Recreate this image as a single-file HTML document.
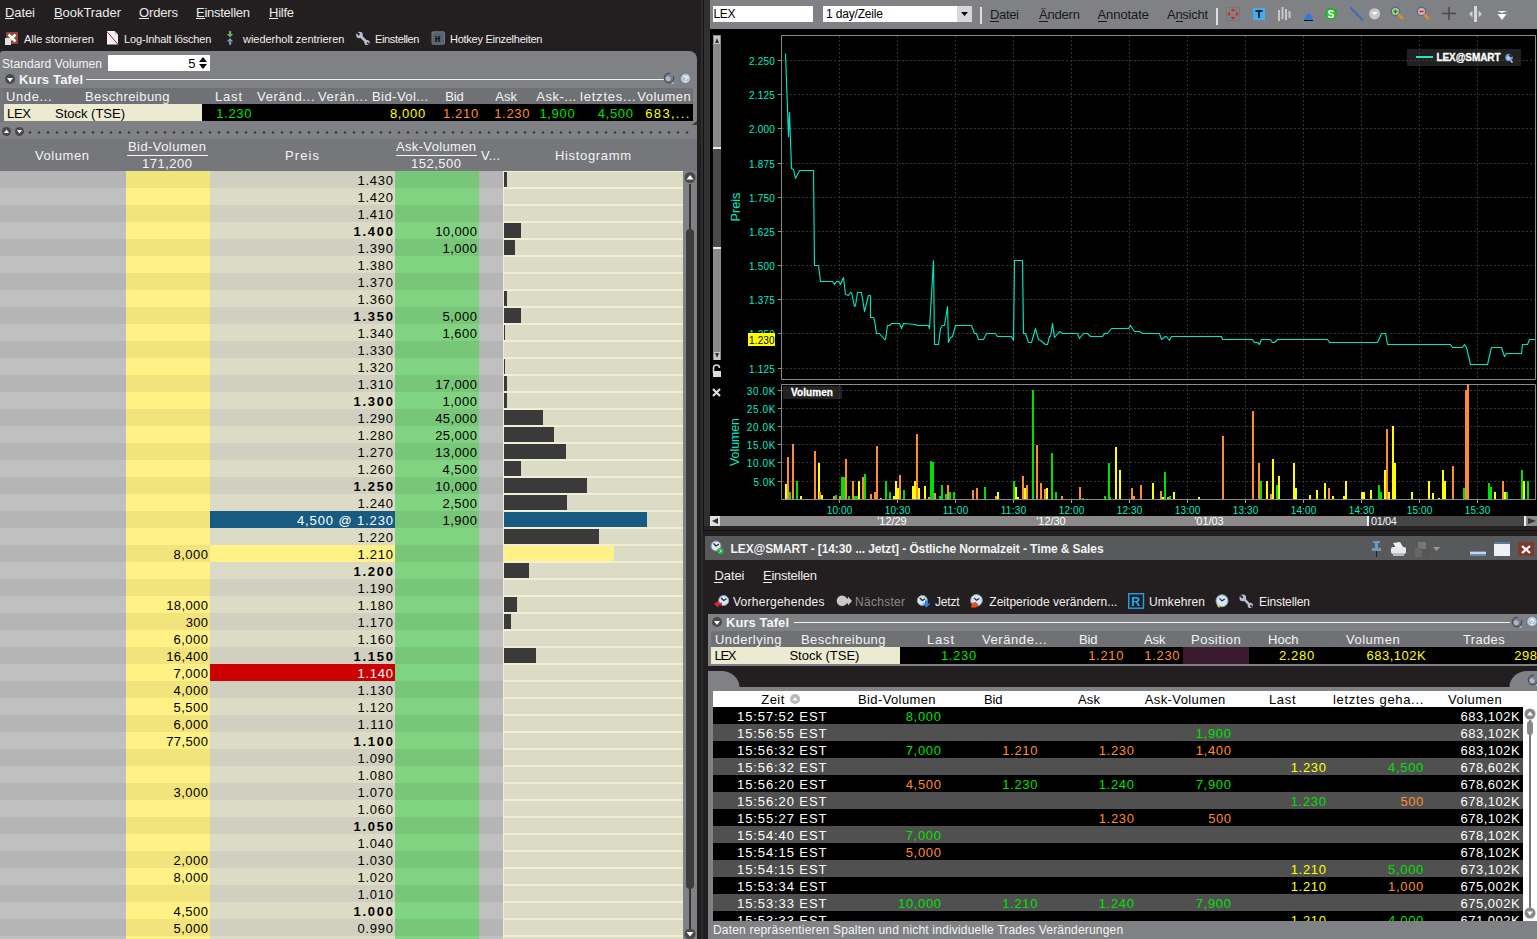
<!DOCTYPE html>
<html><head><meta charset="utf-8"><style>
html,body{margin:0;padding:0;width:1537px;height:939px;overflow:hidden;background:#231f20}
body{position:relative;font-family:"Liberation Sans",sans-serif}
div,span,svg{position:absolute}
.t{white-space:nowrap}
</style></head><body>
<div style="left:0px;top:0px;width:697px;height:939px;background:#231f20;"></div>
<span class="t" style="left:5.00px;top:3.15px;font-size:13px;line-height:20px;color:#ebebeb;letter-spacing:-0.090px;">Datei</span>
<div style="left:5px;top:18px;width:9px;height:1px;background:#ebebeb;"></div>
<span class="t" style="left:54.00px;top:3.15px;font-size:13px;line-height:20px;color:#ebebeb;letter-spacing:-0.050px;">BookTrader</span>
<div style="left:54px;top:18px;width:9px;height:1px;background:#ebebeb;"></div>
<span class="t" style="left:139.00px;top:3.15px;font-size:13px;line-height:20px;color:#ebebeb;letter-spacing:-0.147px;">Orders</span>
<div style="left:139px;top:18px;width:10px;height:1px;background:#ebebeb;"></div>
<span class="t" style="left:196.00px;top:3.15px;font-size:13px;line-height:20px;color:#ebebeb;letter-spacing:-0.266px;">Einstellen</span>
<div style="left:196px;top:18px;width:9px;height:1px;background:#ebebeb;"></div>
<span class="t" style="left:269.00px;top:3.15px;font-size:13px;line-height:20px;color:#ebebeb;letter-spacing:-0.254px;">Hilfe</span>
<div style="left:269px;top:18px;width:9px;height:1px;background:#ebebeb;"></div>
<span class="t" style="left:24.00px;top:29.13px;font-size:11px;line-height:20px;color:#f0f0f0;letter-spacing:-0.025px;">Alle stornieren</span>
<span class="t" style="left:124.00px;top:29.13px;font-size:11px;line-height:20px;color:#f0f0f0;letter-spacing:-0.145px;">Log-Inhalt löschen</span>
<span class="t" style="left:243.00px;top:29.13px;font-size:11px;line-height:20px;color:#f0f0f0;letter-spacing:-0.033px;">wiederholt zentrieren</span>
<span class="t" style="left:375.00px;top:29.13px;font-size:11px;line-height:20px;color:#f0f0f0;letter-spacing:-0.358px;">Einstellen</span>
<span class="t" style="left:450.00px;top:29.13px;font-size:11px;line-height:20px;color:#f0f0f0;letter-spacing:-0.266px;">Hotkey Einzelheiten</span>
<div style="left:0px;top:51px;width:697px;height:888px;background:#808185;border-top-right-radius:8px;border-top-left-radius:3px;"></div>
<span class="t" style="left:2.00px;top:53.74px;font-size:12px;line-height:20px;color:#f4f4f4;letter-spacing:0.085px;">Standard Volumen</span>
<div style="left:108px;top:55px;width:102px;height:16px;background:#ffffff;"></div>
<span class="t" style="left:188.27px;top:53.75px;font-size:13px;line-height:20px;color:#000;">5</span>
<svg style="position:absolute;left:198px;top:56px" width="11" height="14"><path d="M1 6 L5 1 L9 6 Z" fill="#000"/><path d="M1 8 L5 13 L9 8 Z" fill="#000"/></svg>
<svg style="position:absolute;left:4px;top:73px" width="12" height="12"><circle cx="6" cy="6" r="5" fill="#4a4a4a"/><path d="M3 5 L9 5 L6 9 Z" fill="#fff"/></svg>
<span class="t" style="left:19.00px;top:70.15px;font-size:13px;line-height:20px;color:#f4f4f4;font-weight:bold;letter-spacing:0.155px;">Kurs Tafel</span>
<div style="left:86px;top:79px;width:579px;height:1px;background:#f0f0f0;"></div>
<div style="left:4px;top:88px;width:689px;height:16px;background:#707175;"></div>
<div style="left:0px;top:88px;width:4px;height:34px;background:#75767a;"></div>
<span class="t" style="left:6.00px;top:86.85px;font-size:13px;line-height:20px;color:#f4f4f4;letter-spacing:0.596px;">Unde...</span>
<span class="t" style="left:85.00px;top:86.85px;font-size:13px;line-height:20px;color:#f4f4f4;letter-spacing:0.452px;">Beschreibung</span>
<span class="t" style="left:215.00px;top:86.85px;font-size:13px;line-height:20px;color:#f4f4f4;letter-spacing:0.807px;">Last</span>
<span class="t" style="left:257.00px;top:86.85px;font-size:13px;line-height:20px;color:#f4f4f4;letter-spacing:0.682px;">Veränd...</span>
<span class="t" style="left:318.00px;top:86.85px;font-size:13px;line-height:20px;color:#f4f4f4;letter-spacing:0.670px;">Verän...</span>
<span class="t" style="left:372.00px;top:86.85px;font-size:13px;line-height:20px;color:#f4f4f4;letter-spacing:0.441px;">Bid-Vol...</span>
<span class="t" style="left:445.20px;top:86.85px;font-size:13px;line-height:20px;color:#f4f4f4;letter-spacing:-0.148px;">Bid</span>
<span class="t" style="left:495.30px;top:86.85px;font-size:13px;line-height:20px;color:#f4f4f4;letter-spacing:0.014px;">Ask</span>
<span class="t" style="left:536.20px;top:86.85px;font-size:13px;line-height:20px;color:#f4f4f4;letter-spacing:0.529px;">Ask-...</span>
<span class="t" style="left:580.00px;top:86.85px;font-size:13px;line-height:20px;color:#f4f4f4;letter-spacing:0.788px;">letztes...</span>
<span class="t" style="left:637.30px;top:86.85px;font-size:13px;line-height:20px;color:#f4f4f4;letter-spacing:0.465px;">Volumen</span>
<div style="left:4px;top:104px;width:198px;height:17px;background:#ecebd2;"></div>
<div style="left:202px;top:104px;width:491px;height:17px;background:#000000;"></div>
<span class="t" style="left:7.00px;top:103.65px;font-size:13px;line-height:20px;color:#000;letter-spacing:-0.289px;">LEX</span>
<span class="t" style="left:55.00px;top:103.65px;font-size:13px;line-height:20px;color:#000;letter-spacing:-0.006px;">Stock (TSE)</span>
<span class="t" style="left:216.20px;top:103.85px;font-size:13px;line-height:20px;color:#00e000;letter-spacing:0.688px;">1.230</span>
<span class="t" style="left:389.90px;top:103.85px;font-size:13px;line-height:20px;color:#ffff00;letter-spacing:0.688px;">8,000</span>
<span class="t" style="left:442.90px;top:103.85px;font-size:13px;line-height:20px;color:#ff8c30;letter-spacing:0.688px;">1.210</span>
<span class="t" style="left:494.20px;top:103.85px;font-size:13px;line-height:20px;color:#ff8c30;letter-spacing:0.688px;">1.230</span>
<span class="t" style="left:539.40px;top:103.85px;font-size:13px;line-height:20px;color:#00e000;letter-spacing:0.688px;">1,900</span>
<span class="t" style="left:597.70px;top:103.85px;font-size:13px;line-height:20px;color:#00e000;letter-spacing:0.688px;">4,500</span>
<span class="t" style="left:645.30px;top:103.85px;font-size:13px;line-height:20px;color:#ffff00;letter-spacing:1.310px;">683,...</span>
<svg style="position:absolute;left:692px;top:120px" width="5" height="6"><path d="M0 5 L5 5 L5 1 Z" fill="#3a3a3c"/></svg>
<svg style="position:absolute;left:0;top:125px" width="697" height="14"><circle cx="6.5" cy="6.5" r="4.5" fill="#4a4a4a"/><path d="M4 8 L9 8 L6.5 4.5 Z" fill="#fff"/><circle cx="19.5" cy="6.5" r="4.5" fill="#4a4a4a"/><path d="M17 5 L22 5 L19.5 8.5 Z" fill="#fff"/><circle cx="30" cy="7.5" r="1.3" fill="#3a3a3a"/><circle cx="39" cy="7.5" r="1.3" fill="#3a3a3a"/><circle cx="48" cy="7.5" r="1.3" fill="#3a3a3a"/><circle cx="57" cy="7.5" r="1.3" fill="#3a3a3a"/><circle cx="66" cy="7.5" r="1.3" fill="#3a3a3a"/><circle cx="75" cy="7.5" r="1.3" fill="#3a3a3a"/><circle cx="84" cy="7.5" r="1.3" fill="#3a3a3a"/><circle cx="93" cy="7.5" r="1.3" fill="#3a3a3a"/><circle cx="102" cy="7.5" r="1.3" fill="#3a3a3a"/><circle cx="111" cy="7.5" r="1.3" fill="#3a3a3a"/><circle cx="120" cy="7.5" r="1.3" fill="#3a3a3a"/><circle cx="129" cy="7.5" r="1.3" fill="#3a3a3a"/><circle cx="138" cy="7.5" r="1.3" fill="#3a3a3a"/><circle cx="147" cy="7.5" r="1.3" fill="#3a3a3a"/><circle cx="156" cy="7.5" r="1.3" fill="#3a3a3a"/><circle cx="165" cy="7.5" r="1.3" fill="#3a3a3a"/><circle cx="174" cy="7.5" r="1.3" fill="#3a3a3a"/><circle cx="183" cy="7.5" r="1.3" fill="#3a3a3a"/><circle cx="192" cy="7.5" r="1.3" fill="#3a3a3a"/><circle cx="201" cy="7.5" r="1.3" fill="#3a3a3a"/><circle cx="210" cy="7.5" r="1.3" fill="#3a3a3a"/><circle cx="219" cy="7.5" r="1.3" fill="#3a3a3a"/><circle cx="228" cy="7.5" r="1.3" fill="#3a3a3a"/><circle cx="237" cy="7.5" r="1.3" fill="#3a3a3a"/><circle cx="246" cy="7.5" r="1.3" fill="#3a3a3a"/><circle cx="255" cy="7.5" r="1.3" fill="#3a3a3a"/><circle cx="264" cy="7.5" r="1.3" fill="#3a3a3a"/><circle cx="273" cy="7.5" r="1.3" fill="#3a3a3a"/><circle cx="282" cy="7.5" r="1.3" fill="#3a3a3a"/><circle cx="291" cy="7.5" r="1.3" fill="#3a3a3a"/><circle cx="300" cy="7.5" r="1.3" fill="#3a3a3a"/><circle cx="309" cy="7.5" r="1.3" fill="#3a3a3a"/><circle cx="318" cy="7.5" r="1.3" fill="#3a3a3a"/><circle cx="327" cy="7.5" r="1.3" fill="#3a3a3a"/><circle cx="336" cy="7.5" r="1.3" fill="#3a3a3a"/><circle cx="345" cy="7.5" r="1.3" fill="#3a3a3a"/><circle cx="354" cy="7.5" r="1.3" fill="#3a3a3a"/><circle cx="363" cy="7.5" r="1.3" fill="#3a3a3a"/><circle cx="372" cy="7.5" r="1.3" fill="#3a3a3a"/><circle cx="381" cy="7.5" r="1.3" fill="#3a3a3a"/><circle cx="390" cy="7.5" r="1.3" fill="#3a3a3a"/><circle cx="399" cy="7.5" r="1.3" fill="#3a3a3a"/><circle cx="408" cy="7.5" r="1.3" fill="#3a3a3a"/><circle cx="417" cy="7.5" r="1.3" fill="#3a3a3a"/><circle cx="426" cy="7.5" r="1.3" fill="#3a3a3a"/><circle cx="435" cy="7.5" r="1.3" fill="#3a3a3a"/><circle cx="444" cy="7.5" r="1.3" fill="#3a3a3a"/><circle cx="453" cy="7.5" r="1.3" fill="#3a3a3a"/><circle cx="462" cy="7.5" r="1.3" fill="#3a3a3a"/><circle cx="471" cy="7.5" r="1.3" fill="#3a3a3a"/><circle cx="480" cy="7.5" r="1.3" fill="#3a3a3a"/><circle cx="489" cy="7.5" r="1.3" fill="#3a3a3a"/><circle cx="498" cy="7.5" r="1.3" fill="#3a3a3a"/><circle cx="507" cy="7.5" r="1.3" fill="#3a3a3a"/><circle cx="516" cy="7.5" r="1.3" fill="#3a3a3a"/><circle cx="525" cy="7.5" r="1.3" fill="#3a3a3a"/><circle cx="534" cy="7.5" r="1.3" fill="#3a3a3a"/><circle cx="543" cy="7.5" r="1.3" fill="#3a3a3a"/><circle cx="552" cy="7.5" r="1.3" fill="#3a3a3a"/><circle cx="561" cy="7.5" r="1.3" fill="#3a3a3a"/><circle cx="570" cy="7.5" r="1.3" fill="#3a3a3a"/><circle cx="579" cy="7.5" r="1.3" fill="#3a3a3a"/><circle cx="588" cy="7.5" r="1.3" fill="#3a3a3a"/><circle cx="597" cy="7.5" r="1.3" fill="#3a3a3a"/><circle cx="606" cy="7.5" r="1.3" fill="#3a3a3a"/><circle cx="615" cy="7.5" r="1.3" fill="#3a3a3a"/><circle cx="624" cy="7.5" r="1.3" fill="#3a3a3a"/><circle cx="633" cy="7.5" r="1.3" fill="#3a3a3a"/><circle cx="642" cy="7.5" r="1.3" fill="#3a3a3a"/><circle cx="651" cy="7.5" r="1.3" fill="#3a3a3a"/><circle cx="660" cy="7.5" r="1.3" fill="#3a3a3a"/><circle cx="669" cy="7.5" r="1.3" fill="#3a3a3a"/><circle cx="678" cy="7.5" r="1.3" fill="#3a3a3a"/><circle cx="687" cy="7.5" r="1.3" fill="#3a3a3a"/></svg>
<div style="left:0px;top:139px;width:697px;height:32px;background:#76777b;"></div>
<span class="t" style="left:35.00px;top:146.15px;font-size:13px;line-height:20px;color:#f4f4f4;letter-spacing:0.565px;">Volumen</span>
<span class="t" style="left:128.00px;top:137.15px;font-size:13px;line-height:20px;color:#f4f4f4;letter-spacing:0.427px;">Bid-Volumen</span>
<div style="left:127px;top:155px;width:81px;height:1px;background:#f4f4f4;"></div>
<span class="t" style="left:142.00px;top:154.15px;font-size:13px;line-height:20px;color:#f4f4f4;letter-spacing:0.497px;">171,200</span>
<span class="t" style="left:285.00px;top:146.15px;font-size:13px;line-height:20px;color:#f4f4f4;letter-spacing:1.094px;">Preis</span>
<span class="t" style="left:396.00px;top:137.15px;font-size:13px;line-height:20px;color:#f4f4f4;letter-spacing:0.339px;">Ask-Volumen</span>
<div style="left:396px;top:155px;width:81px;height:1px;background:#f4f4f4;"></div>
<span class="t" style="left:411.00px;top:154.15px;font-size:13px;line-height:20px;color:#f4f4f4;letter-spacing:0.497px;">152,500</span>
<span class="t" style="left:481.00px;top:146.15px;font-size:13px;line-height:20px;color:#f4f4f4;letter-spacing:0.229px;">V...</span>
<span class="t" style="left:555.00px;top:146.15px;font-size:13px;line-height:20px;color:#f4f4f4;letter-spacing:0.658px;">Histogramm</span>
<div style="left:0px;top:171px;width:126px;height:17px;background:#b5b5b5;"></div>
<div style="left:126px;top:171px;width:84px;height:17px;background:#f2e47c;"></div>
<div style="left:210px;top:171px;width:185px;height:17px;background:#d0d0c0;"></div>
<div style="left:395px;top:171px;width:84px;height:17px;background:#78c678;"></div>
<div style="left:479px;top:171px;width:24px;height:17px;background:#b5b5b5;"></div>
<div style="left:503px;top:171px;width:180px;height:17px;background:#f1efd3;"></div>
<div style="left:504px;top:172px;width:179px;height:15px;background:#dcdcc6;"></div>
<div style="left:504px;top:172px;width:3px;height:15px;background:#3a3a3a;"></div>
<span class="t" style="left:357.50px;top:170.65px;font-size:13px;line-height:20px;color:#000;letter-spacing:0.738px;">1.430</span>
<div style="left:0px;top:188px;width:126px;height:17px;background:#c0c0c0;"></div>
<div style="left:126px;top:188px;width:84px;height:17px;background:#fff185;"></div>
<div style="left:210px;top:188px;width:185px;height:17px;background:#dcdcc6;"></div>
<div style="left:395px;top:188px;width:84px;height:17px;background:#80d380;"></div>
<div style="left:479px;top:188px;width:24px;height:17px;background:#c0c0c0;"></div>
<div style="left:503px;top:188px;width:180px;height:17px;background:#f1efd3;"></div>
<div style="left:504px;top:189px;width:179px;height:15px;background:#dcdcc6;"></div>
<span class="t" style="left:357.50px;top:187.65px;font-size:13px;line-height:20px;color:#000;letter-spacing:0.738px;">1.420</span>
<div style="left:0px;top:205px;width:126px;height:17px;background:#b5b5b5;"></div>
<div style="left:126px;top:205px;width:84px;height:17px;background:#f2e47c;"></div>
<div style="left:210px;top:205px;width:185px;height:17px;background:#d0d0c0;"></div>
<div style="left:395px;top:205px;width:84px;height:17px;background:#78c678;"></div>
<div style="left:479px;top:205px;width:24px;height:17px;background:#b5b5b5;"></div>
<div style="left:503px;top:205px;width:180px;height:17px;background:#f1efd3;"></div>
<div style="left:504px;top:206px;width:179px;height:15px;background:#dcdcc6;"></div>
<span class="t" style="left:357.50px;top:204.65px;font-size:13px;line-height:20px;color:#000;letter-spacing:0.738px;">1.410</span>
<div style="left:0px;top:222px;width:126px;height:17px;background:#c0c0c0;"></div>
<div style="left:126px;top:222px;width:84px;height:17px;background:#fff185;"></div>
<div style="left:210px;top:222px;width:185px;height:17px;background:#dcdcc6;"></div>
<div style="left:395px;top:222px;width:84px;height:17px;background:#80d380;"></div>
<div style="left:479px;top:222px;width:24px;height:17px;background:#c0c0c0;"></div>
<div style="left:503px;top:222px;width:180px;height:17px;background:#f1efd3;"></div>
<div style="left:504px;top:223px;width:179px;height:15px;background:#dcdcc6;"></div>
<div style="left:504px;top:223px;width:17px;height:15px;background:#3a3a3a;"></div>
<span class="t" style="left:353.50px;top:221.65px;font-size:13px;line-height:20px;color:#000;font-weight:bold;letter-spacing:1.738px;">1.400</span>
<span class="t" style="left:435.15px;top:221.65px;font-size:13px;line-height:20px;color:#000;letter-spacing:0.414px;">10,000</span>
<div style="left:0px;top:239px;width:126px;height:17px;background:#b5b5b5;"></div>
<div style="left:126px;top:239px;width:84px;height:17px;background:#f2e47c;"></div>
<div style="left:210px;top:239px;width:185px;height:17px;background:#d0d0c0;"></div>
<div style="left:395px;top:239px;width:84px;height:17px;background:#78c678;"></div>
<div style="left:479px;top:239px;width:24px;height:17px;background:#b5b5b5;"></div>
<div style="left:503px;top:239px;width:180px;height:17px;background:#f1efd3;"></div>
<div style="left:504px;top:240px;width:179px;height:15px;background:#dcdcc6;"></div>
<div style="left:504px;top:240px;width:11px;height:15px;background:#3a3a3a;"></div>
<span class="t" style="left:357.50px;top:238.65px;font-size:13px;line-height:20px;color:#000;letter-spacing:0.738px;">1.390</span>
<span class="t" style="left:442.60px;top:238.65px;font-size:13px;line-height:20px;color:#000;letter-spacing:0.463px;">1,000</span>
<div style="left:0px;top:256px;width:126px;height:17px;background:#c0c0c0;"></div>
<div style="left:126px;top:256px;width:84px;height:17px;background:#fff185;"></div>
<div style="left:210px;top:256px;width:185px;height:17px;background:#dcdcc6;"></div>
<div style="left:395px;top:256px;width:84px;height:17px;background:#80d380;"></div>
<div style="left:479px;top:256px;width:24px;height:17px;background:#c0c0c0;"></div>
<div style="left:503px;top:256px;width:180px;height:17px;background:#f1efd3;"></div>
<div style="left:504px;top:257px;width:179px;height:15px;background:#dcdcc6;"></div>
<span class="t" style="left:357.50px;top:255.65px;font-size:13px;line-height:20px;color:#000;letter-spacing:0.738px;">1.380</span>
<div style="left:0px;top:273px;width:126px;height:17px;background:#b5b5b5;"></div>
<div style="left:126px;top:273px;width:84px;height:17px;background:#f2e47c;"></div>
<div style="left:210px;top:273px;width:185px;height:17px;background:#d0d0c0;"></div>
<div style="left:395px;top:273px;width:84px;height:17px;background:#78c678;"></div>
<div style="left:479px;top:273px;width:24px;height:17px;background:#b5b5b5;"></div>
<div style="left:503px;top:273px;width:180px;height:17px;background:#f1efd3;"></div>
<div style="left:504px;top:274px;width:179px;height:15px;background:#dcdcc6;"></div>
<span class="t" style="left:357.50px;top:272.65px;font-size:13px;line-height:20px;color:#000;letter-spacing:0.738px;">1.370</span>
<div style="left:0px;top:290px;width:126px;height:17px;background:#c0c0c0;"></div>
<div style="left:126px;top:290px;width:84px;height:17px;background:#fff185;"></div>
<div style="left:210px;top:290px;width:185px;height:17px;background:#dcdcc6;"></div>
<div style="left:395px;top:290px;width:84px;height:17px;background:#80d380;"></div>
<div style="left:479px;top:290px;width:24px;height:17px;background:#c0c0c0;"></div>
<div style="left:503px;top:290px;width:180px;height:17px;background:#f1efd3;"></div>
<div style="left:504px;top:291px;width:179px;height:15px;background:#dcdcc6;"></div>
<div style="left:504px;top:291px;width:3px;height:15px;background:#3a3a3a;"></div>
<span class="t" style="left:357.50px;top:289.65px;font-size:13px;line-height:20px;color:#000;letter-spacing:0.738px;">1.360</span>
<div style="left:0px;top:307px;width:126px;height:17px;background:#b5b5b5;"></div>
<div style="left:126px;top:307px;width:84px;height:17px;background:#f2e47c;"></div>
<div style="left:210px;top:307px;width:185px;height:17px;background:#d0d0c0;"></div>
<div style="left:395px;top:307px;width:84px;height:17px;background:#78c678;"></div>
<div style="left:479px;top:307px;width:24px;height:17px;background:#b5b5b5;"></div>
<div style="left:503px;top:307px;width:180px;height:17px;background:#f1efd3;"></div>
<div style="left:504px;top:308px;width:179px;height:15px;background:#dcdcc6;"></div>
<div style="left:504px;top:308px;width:17px;height:15px;background:#3a3a3a;"></div>
<span class="t" style="left:353.50px;top:306.65px;font-size:13px;line-height:20px;color:#000;font-weight:bold;letter-spacing:1.738px;">1.350</span>
<span class="t" style="left:442.60px;top:306.65px;font-size:13px;line-height:20px;color:#000;letter-spacing:0.463px;">5,000</span>
<div style="left:0px;top:324px;width:126px;height:17px;background:#c0c0c0;"></div>
<div style="left:126px;top:324px;width:84px;height:17px;background:#fff185;"></div>
<div style="left:210px;top:324px;width:185px;height:17px;background:#dcdcc6;"></div>
<div style="left:395px;top:324px;width:84px;height:17px;background:#80d380;"></div>
<div style="left:479px;top:324px;width:24px;height:17px;background:#c0c0c0;"></div>
<div style="left:503px;top:324px;width:180px;height:17px;background:#f1efd3;"></div>
<div style="left:504px;top:325px;width:179px;height:15px;background:#dcdcc6;"></div>
<div style="left:504px;top:325px;width:1px;height:15px;background:#3a3a3a;"></div>
<span class="t" style="left:357.50px;top:323.65px;font-size:13px;line-height:20px;color:#000;letter-spacing:0.738px;">1.340</span>
<span class="t" style="left:442.60px;top:323.65px;font-size:13px;line-height:20px;color:#000;letter-spacing:0.463px;">1,600</span>
<div style="left:0px;top:341px;width:126px;height:17px;background:#b5b5b5;"></div>
<div style="left:126px;top:341px;width:84px;height:17px;background:#f2e47c;"></div>
<div style="left:210px;top:341px;width:185px;height:17px;background:#d0d0c0;"></div>
<div style="left:395px;top:341px;width:84px;height:17px;background:#78c678;"></div>
<div style="left:479px;top:341px;width:24px;height:17px;background:#b5b5b5;"></div>
<div style="left:503px;top:341px;width:180px;height:17px;background:#f1efd3;"></div>
<div style="left:504px;top:342px;width:179px;height:15px;background:#dcdcc6;"></div>
<span class="t" style="left:357.50px;top:340.65px;font-size:13px;line-height:20px;color:#000;letter-spacing:0.738px;">1.330</span>
<div style="left:0px;top:358px;width:126px;height:17px;background:#c0c0c0;"></div>
<div style="left:126px;top:358px;width:84px;height:17px;background:#fff185;"></div>
<div style="left:210px;top:358px;width:185px;height:17px;background:#dcdcc6;"></div>
<div style="left:395px;top:358px;width:84px;height:17px;background:#80d380;"></div>
<div style="left:479px;top:358px;width:24px;height:17px;background:#c0c0c0;"></div>
<div style="left:503px;top:358px;width:180px;height:17px;background:#f1efd3;"></div>
<div style="left:504px;top:359px;width:179px;height:15px;background:#dcdcc6;"></div>
<div style="left:504px;top:359px;width:1px;height:15px;background:#3a3a3a;"></div>
<span class="t" style="left:357.50px;top:357.65px;font-size:13px;line-height:20px;color:#000;letter-spacing:0.738px;">1.320</span>
<div style="left:0px;top:375px;width:126px;height:17px;background:#b5b5b5;"></div>
<div style="left:126px;top:375px;width:84px;height:17px;background:#f2e47c;"></div>
<div style="left:210px;top:375px;width:185px;height:17px;background:#d0d0c0;"></div>
<div style="left:395px;top:375px;width:84px;height:17px;background:#78c678;"></div>
<div style="left:479px;top:375px;width:24px;height:17px;background:#b5b5b5;"></div>
<div style="left:503px;top:375px;width:180px;height:17px;background:#f1efd3;"></div>
<div style="left:504px;top:376px;width:179px;height:15px;background:#dcdcc6;"></div>
<div style="left:504px;top:376px;width:3px;height:15px;background:#3a3a3a;"></div>
<span class="t" style="left:357.50px;top:374.65px;font-size:13px;line-height:20px;color:#000;letter-spacing:0.738px;">1.310</span>
<span class="t" style="left:435.15px;top:374.65px;font-size:13px;line-height:20px;color:#000;letter-spacing:0.414px;">17,000</span>
<div style="left:0px;top:392px;width:126px;height:17px;background:#c0c0c0;"></div>
<div style="left:126px;top:392px;width:84px;height:17px;background:#fff185;"></div>
<div style="left:210px;top:392px;width:185px;height:17px;background:#dcdcc6;"></div>
<div style="left:395px;top:392px;width:84px;height:17px;background:#80d380;"></div>
<div style="left:479px;top:392px;width:24px;height:17px;background:#c0c0c0;"></div>
<div style="left:503px;top:392px;width:180px;height:17px;background:#f1efd3;"></div>
<div style="left:504px;top:393px;width:179px;height:15px;background:#dcdcc6;"></div>
<div style="left:504px;top:393px;width:3px;height:15px;background:#3a3a3a;"></div>
<span class="t" style="left:353.50px;top:391.65px;font-size:13px;line-height:20px;color:#000;font-weight:bold;letter-spacing:1.738px;">1.300</span>
<span class="t" style="left:442.60px;top:391.65px;font-size:13px;line-height:20px;color:#000;letter-spacing:0.463px;">1,000</span>
<div style="left:0px;top:409px;width:126px;height:17px;background:#b5b5b5;"></div>
<div style="left:126px;top:409px;width:84px;height:17px;background:#f2e47c;"></div>
<div style="left:210px;top:409px;width:185px;height:17px;background:#d0d0c0;"></div>
<div style="left:395px;top:409px;width:84px;height:17px;background:#78c678;"></div>
<div style="left:479px;top:409px;width:24px;height:17px;background:#b5b5b5;"></div>
<div style="left:503px;top:409px;width:180px;height:17px;background:#f1efd3;"></div>
<div style="left:504px;top:410px;width:179px;height:15px;background:#dcdcc6;"></div>
<div style="left:504px;top:410px;width:39px;height:15px;background:#3a3a3a;"></div>
<span class="t" style="left:357.50px;top:408.65px;font-size:13px;line-height:20px;color:#000;letter-spacing:0.738px;">1.290</span>
<span class="t" style="left:435.15px;top:408.65px;font-size:13px;line-height:20px;color:#000;letter-spacing:0.414px;">45,000</span>
<div style="left:0px;top:426px;width:126px;height:17px;background:#c0c0c0;"></div>
<div style="left:126px;top:426px;width:84px;height:17px;background:#fff185;"></div>
<div style="left:210px;top:426px;width:185px;height:17px;background:#dcdcc6;"></div>
<div style="left:395px;top:426px;width:84px;height:17px;background:#80d380;"></div>
<div style="left:479px;top:426px;width:24px;height:17px;background:#c0c0c0;"></div>
<div style="left:503px;top:426px;width:180px;height:17px;background:#f1efd3;"></div>
<div style="left:504px;top:427px;width:179px;height:15px;background:#dcdcc6;"></div>
<div style="left:504px;top:427px;width:50px;height:15px;background:#3a3a3a;"></div>
<span class="t" style="left:357.50px;top:425.65px;font-size:13px;line-height:20px;color:#000;letter-spacing:0.738px;">1.280</span>
<span class="t" style="left:435.15px;top:425.65px;font-size:13px;line-height:20px;color:#000;letter-spacing:0.414px;">25,000</span>
<div style="left:0px;top:443px;width:126px;height:17px;background:#b5b5b5;"></div>
<div style="left:126px;top:443px;width:84px;height:17px;background:#f2e47c;"></div>
<div style="left:210px;top:443px;width:185px;height:17px;background:#d0d0c0;"></div>
<div style="left:395px;top:443px;width:84px;height:17px;background:#78c678;"></div>
<div style="left:479px;top:443px;width:24px;height:17px;background:#b5b5b5;"></div>
<div style="left:503px;top:443px;width:180px;height:17px;background:#f1efd3;"></div>
<div style="left:504px;top:444px;width:179px;height:15px;background:#dcdcc6;"></div>
<div style="left:504px;top:444px;width:62px;height:15px;background:#3a3a3a;"></div>
<span class="t" style="left:357.50px;top:442.65px;font-size:13px;line-height:20px;color:#000;letter-spacing:0.738px;">1.270</span>
<span class="t" style="left:435.15px;top:442.65px;font-size:13px;line-height:20px;color:#000;letter-spacing:0.414px;">13,000</span>
<div style="left:0px;top:460px;width:126px;height:17px;background:#c0c0c0;"></div>
<div style="left:126px;top:460px;width:84px;height:17px;background:#fff185;"></div>
<div style="left:210px;top:460px;width:185px;height:17px;background:#dcdcc6;"></div>
<div style="left:395px;top:460px;width:84px;height:17px;background:#80d380;"></div>
<div style="left:479px;top:460px;width:24px;height:17px;background:#c0c0c0;"></div>
<div style="left:503px;top:460px;width:180px;height:17px;background:#f1efd3;"></div>
<div style="left:504px;top:461px;width:179px;height:15px;background:#dcdcc6;"></div>
<div style="left:504px;top:461px;width:17px;height:15px;background:#3a3a3a;"></div>
<span class="t" style="left:357.50px;top:459.65px;font-size:13px;line-height:20px;color:#000;letter-spacing:0.738px;">1.260</span>
<span class="t" style="left:442.60px;top:459.65px;font-size:13px;line-height:20px;color:#000;letter-spacing:0.463px;">4,500</span>
<div style="left:0px;top:477px;width:126px;height:17px;background:#b5b5b5;"></div>
<div style="left:126px;top:477px;width:84px;height:17px;background:#f2e47c;"></div>
<div style="left:210px;top:477px;width:185px;height:17px;background:#d0d0c0;"></div>
<div style="left:395px;top:477px;width:84px;height:17px;background:#78c678;"></div>
<div style="left:479px;top:477px;width:24px;height:17px;background:#b5b5b5;"></div>
<div style="left:503px;top:477px;width:180px;height:17px;background:#f1efd3;"></div>
<div style="left:504px;top:478px;width:179px;height:15px;background:#dcdcc6;"></div>
<div style="left:504px;top:478px;width:83px;height:15px;background:#3a3a3a;"></div>
<span class="t" style="left:353.50px;top:476.65px;font-size:13px;line-height:20px;color:#000;font-weight:bold;letter-spacing:1.738px;">1.250</span>
<span class="t" style="left:435.15px;top:476.65px;font-size:13px;line-height:20px;color:#000;letter-spacing:0.414px;">10,000</span>
<div style="left:0px;top:494px;width:126px;height:17px;background:#c0c0c0;"></div>
<div style="left:126px;top:494px;width:84px;height:17px;background:#fff185;"></div>
<div style="left:210px;top:494px;width:185px;height:17px;background:#dcdcc6;"></div>
<div style="left:395px;top:494px;width:84px;height:17px;background:#80d380;"></div>
<div style="left:479px;top:494px;width:24px;height:17px;background:#c0c0c0;"></div>
<div style="left:503px;top:494px;width:180px;height:17px;background:#f1efd3;"></div>
<div style="left:504px;top:495px;width:179px;height:15px;background:#dcdcc6;"></div>
<div style="left:504px;top:495px;width:63px;height:15px;background:#3a3a3a;"></div>
<span class="t" style="left:357.50px;top:493.65px;font-size:13px;line-height:20px;color:#000;letter-spacing:0.738px;">1.240</span>
<span class="t" style="left:442.60px;top:493.65px;font-size:13px;line-height:20px;color:#000;letter-spacing:0.463px;">2,500</span>
<div style="left:0px;top:511px;width:126px;height:17px;background:#b5b5b5;"></div>
<div style="left:126px;top:511px;width:84px;height:17px;background:#f2e47c;"></div>
<div style="left:210px;top:511px;width:185px;height:17px;background:#175a82;"></div>
<div style="left:395px;top:511px;width:84px;height:17px;background:#78c678;"></div>
<div style="left:479px;top:511px;width:24px;height:17px;background:#b5b5b5;"></div>
<div style="left:503px;top:511px;width:180px;height:17px;background:#f1efd3;"></div>
<div style="left:504px;top:512px;width:179px;height:15px;background:#dcdcc6;"></div>
<div style="left:504px;top:512px;width:143px;height:15px;background:#175a82;"></div>
<span class="t" style="left:297.00px;top:510.65px;font-size:13px;line-height:20px;color:#fff;letter-spacing:0.874px;">4,500 @ 1.230</span>
<span class="t" style="left:442.60px;top:510.65px;font-size:13px;line-height:20px;color:#000;letter-spacing:0.463px;">1,900</span>
<div style="left:0px;top:528px;width:126px;height:17px;background:#c0c0c0;"></div>
<div style="left:126px;top:528px;width:84px;height:17px;background:#fff185;"></div>
<div style="left:210px;top:528px;width:185px;height:17px;background:#dcdcc6;"></div>
<div style="left:395px;top:528px;width:84px;height:17px;background:#80d380;"></div>
<div style="left:479px;top:528px;width:24px;height:17px;background:#c0c0c0;"></div>
<div style="left:503px;top:528px;width:180px;height:17px;background:#f1efd3;"></div>
<div style="left:504px;top:529px;width:179px;height:15px;background:#dcdcc6;"></div>
<div style="left:504px;top:529px;width:95px;height:15px;background:#3a3a3a;"></div>
<span class="t" style="left:357.50px;top:527.65px;font-size:13px;line-height:20px;color:#000;letter-spacing:0.738px;">1.220</span>
<div style="left:0px;top:545px;width:126px;height:17px;background:#b5b5b5;"></div>
<div style="left:126px;top:545px;width:84px;height:17px;background:#f2e47c;"></div>
<div style="left:210px;top:545px;width:185px;height:17px;background:#fff185;"></div>
<div style="left:395px;top:545px;width:84px;height:17px;background:#78c678;"></div>
<div style="left:479px;top:545px;width:24px;height:17px;background:#b5b5b5;"></div>
<div style="left:503px;top:545px;width:180px;height:17px;background:#f1efd3;"></div>
<div style="left:504px;top:546px;width:179px;height:15px;background:#dcdcc6;"></div>
<div style="left:504px;top:546px;width:110px;height:15px;background:#fff185;"></div>
<span class="t" style="left:357.50px;top:544.65px;font-size:13px;line-height:20px;color:#000;letter-spacing:0.738px;">1.210</span>
<span class="t" style="left:173.60px;top:544.65px;font-size:13px;line-height:20px;color:#000;letter-spacing:0.463px;">8,000</span>
<div style="left:0px;top:562px;width:126px;height:17px;background:#c0c0c0;"></div>
<div style="left:126px;top:562px;width:84px;height:17px;background:#fff185;"></div>
<div style="left:210px;top:562px;width:185px;height:17px;background:#dcdcc6;"></div>
<div style="left:395px;top:562px;width:84px;height:17px;background:#80d380;"></div>
<div style="left:479px;top:562px;width:24px;height:17px;background:#c0c0c0;"></div>
<div style="left:503px;top:562px;width:180px;height:17px;background:#f1efd3;"></div>
<div style="left:504px;top:563px;width:179px;height:15px;background:#dcdcc6;"></div>
<div style="left:504px;top:563px;width:25px;height:15px;background:#3a3a3a;"></div>
<span class="t" style="left:353.50px;top:561.65px;font-size:13px;line-height:20px;color:#000;font-weight:bold;letter-spacing:1.738px;">1.200</span>
<div style="left:0px;top:579px;width:126px;height:17px;background:#b5b5b5;"></div>
<div style="left:126px;top:579px;width:84px;height:17px;background:#f2e47c;"></div>
<div style="left:210px;top:579px;width:185px;height:17px;background:#d0d0c0;"></div>
<div style="left:395px;top:579px;width:84px;height:17px;background:#78c678;"></div>
<div style="left:479px;top:579px;width:24px;height:17px;background:#b5b5b5;"></div>
<div style="left:503px;top:579px;width:180px;height:17px;background:#f1efd3;"></div>
<div style="left:504px;top:580px;width:179px;height:15px;background:#dcdcc6;"></div>
<span class="t" style="left:357.50px;top:578.65px;font-size:13px;line-height:20px;color:#000;letter-spacing:0.738px;">1.190</span>
<div style="left:0px;top:596px;width:126px;height:17px;background:#c0c0c0;"></div>
<div style="left:126px;top:596px;width:84px;height:17px;background:#fff185;"></div>
<div style="left:210px;top:596px;width:185px;height:17px;background:#dcdcc6;"></div>
<div style="left:395px;top:596px;width:84px;height:17px;background:#80d380;"></div>
<div style="left:479px;top:596px;width:24px;height:17px;background:#c0c0c0;"></div>
<div style="left:503px;top:596px;width:180px;height:17px;background:#f1efd3;"></div>
<div style="left:504px;top:597px;width:179px;height:15px;background:#dcdcc6;"></div>
<div style="left:504px;top:597px;width:13px;height:15px;background:#3a3a3a;"></div>
<span class="t" style="left:357.50px;top:595.65px;font-size:13px;line-height:20px;color:#000;letter-spacing:0.738px;">1.180</span>
<span class="t" style="left:166.15px;top:595.65px;font-size:13px;line-height:20px;color:#000;letter-spacing:0.414px;">18,000</span>
<div style="left:0px;top:613px;width:126px;height:17px;background:#b5b5b5;"></div>
<div style="left:126px;top:613px;width:84px;height:17px;background:#f2e47c;"></div>
<div style="left:210px;top:613px;width:185px;height:17px;background:#d0d0c0;"></div>
<div style="left:395px;top:613px;width:84px;height:17px;background:#78c678;"></div>
<div style="left:479px;top:613px;width:24px;height:17px;background:#b5b5b5;"></div>
<div style="left:503px;top:613px;width:180px;height:17px;background:#f1efd3;"></div>
<div style="left:504px;top:614px;width:179px;height:15px;background:#dcdcc6;"></div>
<div style="left:504px;top:614px;width:7px;height:15px;background:#3a3a3a;"></div>
<span class="t" style="left:357.50px;top:612.65px;font-size:13px;line-height:20px;color:#000;letter-spacing:0.738px;">1.170</span>
<span class="t" style="left:185.65px;top:612.65px;font-size:13px;line-height:20px;color:#000;letter-spacing:0.323px;">300</span>
<div style="left:0px;top:630px;width:126px;height:17px;background:#c0c0c0;"></div>
<div style="left:126px;top:630px;width:84px;height:17px;background:#fff185;"></div>
<div style="left:210px;top:630px;width:185px;height:17px;background:#dcdcc6;"></div>
<div style="left:395px;top:630px;width:84px;height:17px;background:#80d380;"></div>
<div style="left:479px;top:630px;width:24px;height:17px;background:#c0c0c0;"></div>
<div style="left:503px;top:630px;width:180px;height:17px;background:#f1efd3;"></div>
<div style="left:504px;top:631px;width:179px;height:15px;background:#dcdcc6;"></div>
<span class="t" style="left:357.50px;top:629.65px;font-size:13px;line-height:20px;color:#000;letter-spacing:0.738px;">1.160</span>
<span class="t" style="left:173.60px;top:629.65px;font-size:13px;line-height:20px;color:#000;letter-spacing:0.463px;">6,000</span>
<div style="left:0px;top:647px;width:126px;height:17px;background:#b5b5b5;"></div>
<div style="left:126px;top:647px;width:84px;height:17px;background:#f2e47c;"></div>
<div style="left:210px;top:647px;width:185px;height:17px;background:#d0d0c0;"></div>
<div style="left:395px;top:647px;width:84px;height:17px;background:#78c678;"></div>
<div style="left:479px;top:647px;width:24px;height:17px;background:#b5b5b5;"></div>
<div style="left:503px;top:647px;width:180px;height:17px;background:#f1efd3;"></div>
<div style="left:504px;top:648px;width:179px;height:15px;background:#dcdcc6;"></div>
<div style="left:504px;top:648px;width:32px;height:15px;background:#3a3a3a;"></div>
<span class="t" style="left:353.50px;top:646.65px;font-size:13px;line-height:20px;color:#000;font-weight:bold;letter-spacing:1.738px;">1.150</span>
<span class="t" style="left:166.15px;top:646.65px;font-size:13px;line-height:20px;color:#000;letter-spacing:0.414px;">16,400</span>
<div style="left:0px;top:664px;width:126px;height:17px;background:#c0c0c0;"></div>
<div style="left:126px;top:664px;width:84px;height:17px;background:#fff185;"></div>
<div style="left:210px;top:664px;width:185px;height:17px;background:#cc0000;"></div>
<div style="left:395px;top:664px;width:84px;height:17px;background:#80d380;"></div>
<div style="left:479px;top:664px;width:24px;height:17px;background:#c0c0c0;"></div>
<div style="left:503px;top:664px;width:180px;height:17px;background:#f1efd3;"></div>
<div style="left:504px;top:665px;width:179px;height:15px;background:#dcdcc6;"></div>
<span class="t" style="left:357.50px;top:663.65px;font-size:13px;line-height:20px;color:#fff;letter-spacing:0.738px;">1.140</span>
<span class="t" style="left:173.60px;top:663.65px;font-size:13px;line-height:20px;color:#000;letter-spacing:0.463px;">7,000</span>
<div style="left:0px;top:681px;width:126px;height:17px;background:#b5b5b5;"></div>
<div style="left:126px;top:681px;width:84px;height:17px;background:#f2e47c;"></div>
<div style="left:210px;top:681px;width:185px;height:17px;background:#d0d0c0;"></div>
<div style="left:395px;top:681px;width:84px;height:17px;background:#78c678;"></div>
<div style="left:479px;top:681px;width:24px;height:17px;background:#b5b5b5;"></div>
<div style="left:503px;top:681px;width:180px;height:17px;background:#f1efd3;"></div>
<div style="left:504px;top:682px;width:179px;height:15px;background:#dcdcc6;"></div>
<span class="t" style="left:357.50px;top:680.65px;font-size:13px;line-height:20px;color:#000;letter-spacing:0.738px;">1.130</span>
<span class="t" style="left:173.60px;top:680.65px;font-size:13px;line-height:20px;color:#000;letter-spacing:0.463px;">4,000</span>
<div style="left:0px;top:698px;width:126px;height:17px;background:#c0c0c0;"></div>
<div style="left:126px;top:698px;width:84px;height:17px;background:#fff185;"></div>
<div style="left:210px;top:698px;width:185px;height:17px;background:#dcdcc6;"></div>
<div style="left:395px;top:698px;width:84px;height:17px;background:#80d380;"></div>
<div style="left:479px;top:698px;width:24px;height:17px;background:#c0c0c0;"></div>
<div style="left:503px;top:698px;width:180px;height:17px;background:#f1efd3;"></div>
<div style="left:504px;top:699px;width:179px;height:15px;background:#dcdcc6;"></div>
<span class="t" style="left:357.50px;top:697.65px;font-size:13px;line-height:20px;color:#000;letter-spacing:0.738px;">1.120</span>
<span class="t" style="left:173.60px;top:697.65px;font-size:13px;line-height:20px;color:#000;letter-spacing:0.463px;">5,500</span>
<div style="left:0px;top:715px;width:126px;height:17px;background:#b5b5b5;"></div>
<div style="left:126px;top:715px;width:84px;height:17px;background:#f2e47c;"></div>
<div style="left:210px;top:715px;width:185px;height:17px;background:#d0d0c0;"></div>
<div style="left:395px;top:715px;width:84px;height:17px;background:#78c678;"></div>
<div style="left:479px;top:715px;width:24px;height:17px;background:#b5b5b5;"></div>
<div style="left:503px;top:715px;width:180px;height:17px;background:#f1efd3;"></div>
<div style="left:504px;top:716px;width:179px;height:15px;background:#dcdcc6;"></div>
<span class="t" style="left:357.50px;top:714.65px;font-size:13px;line-height:20px;color:#000;letter-spacing:0.980px;">1.110</span>
<span class="t" style="left:173.60px;top:714.65px;font-size:13px;line-height:20px;color:#000;letter-spacing:0.463px;">6,000</span>
<div style="left:0px;top:732px;width:126px;height:17px;background:#c0c0c0;"></div>
<div style="left:126px;top:732px;width:84px;height:17px;background:#fff185;"></div>
<div style="left:210px;top:732px;width:185px;height:17px;background:#dcdcc6;"></div>
<div style="left:395px;top:732px;width:84px;height:17px;background:#80d380;"></div>
<div style="left:479px;top:732px;width:24px;height:17px;background:#c0c0c0;"></div>
<div style="left:503px;top:732px;width:180px;height:17px;background:#f1efd3;"></div>
<div style="left:504px;top:733px;width:179px;height:15px;background:#dcdcc6;"></div>
<span class="t" style="left:353.50px;top:731.65px;font-size:13px;line-height:20px;color:#000;font-weight:bold;letter-spacing:1.738px;">1.100</span>
<span class="t" style="left:166.15px;top:731.65px;font-size:13px;line-height:20px;color:#000;letter-spacing:0.414px;">77,500</span>
<div style="left:0px;top:749px;width:126px;height:17px;background:#b5b5b5;"></div>
<div style="left:126px;top:749px;width:84px;height:17px;background:#f2e47c;"></div>
<div style="left:210px;top:749px;width:185px;height:17px;background:#d0d0c0;"></div>
<div style="left:395px;top:749px;width:84px;height:17px;background:#78c678;"></div>
<div style="left:479px;top:749px;width:24px;height:17px;background:#b5b5b5;"></div>
<div style="left:503px;top:749px;width:180px;height:17px;background:#f1efd3;"></div>
<div style="left:504px;top:750px;width:179px;height:15px;background:#dcdcc6;"></div>
<span class="t" style="left:357.50px;top:748.65px;font-size:13px;line-height:20px;color:#000;letter-spacing:0.738px;">1.090</span>
<div style="left:0px;top:766px;width:126px;height:17px;background:#c0c0c0;"></div>
<div style="left:126px;top:766px;width:84px;height:17px;background:#fff185;"></div>
<div style="left:210px;top:766px;width:185px;height:17px;background:#dcdcc6;"></div>
<div style="left:395px;top:766px;width:84px;height:17px;background:#80d380;"></div>
<div style="left:479px;top:766px;width:24px;height:17px;background:#c0c0c0;"></div>
<div style="left:503px;top:766px;width:180px;height:17px;background:#f1efd3;"></div>
<div style="left:504px;top:767px;width:179px;height:15px;background:#dcdcc6;"></div>
<span class="t" style="left:357.50px;top:765.65px;font-size:13px;line-height:20px;color:#000;letter-spacing:0.738px;">1.080</span>
<div style="left:0px;top:783px;width:126px;height:17px;background:#b5b5b5;"></div>
<div style="left:126px;top:783px;width:84px;height:17px;background:#f2e47c;"></div>
<div style="left:210px;top:783px;width:185px;height:17px;background:#d0d0c0;"></div>
<div style="left:395px;top:783px;width:84px;height:17px;background:#78c678;"></div>
<div style="left:479px;top:783px;width:24px;height:17px;background:#b5b5b5;"></div>
<div style="left:503px;top:783px;width:180px;height:17px;background:#f1efd3;"></div>
<div style="left:504px;top:784px;width:179px;height:15px;background:#dcdcc6;"></div>
<span class="t" style="left:357.50px;top:782.65px;font-size:13px;line-height:20px;color:#000;letter-spacing:0.738px;">1.070</span>
<span class="t" style="left:173.60px;top:782.65px;font-size:13px;line-height:20px;color:#000;letter-spacing:0.463px;">3,000</span>
<div style="left:0px;top:800px;width:126px;height:17px;background:#c0c0c0;"></div>
<div style="left:126px;top:800px;width:84px;height:17px;background:#fff185;"></div>
<div style="left:210px;top:800px;width:185px;height:17px;background:#dcdcc6;"></div>
<div style="left:395px;top:800px;width:84px;height:17px;background:#80d380;"></div>
<div style="left:479px;top:800px;width:24px;height:17px;background:#c0c0c0;"></div>
<div style="left:503px;top:800px;width:180px;height:17px;background:#f1efd3;"></div>
<div style="left:504px;top:801px;width:179px;height:15px;background:#dcdcc6;"></div>
<span class="t" style="left:357.50px;top:799.65px;font-size:13px;line-height:20px;color:#000;letter-spacing:0.738px;">1.060</span>
<div style="left:0px;top:817px;width:126px;height:17px;background:#b5b5b5;"></div>
<div style="left:126px;top:817px;width:84px;height:17px;background:#f2e47c;"></div>
<div style="left:210px;top:817px;width:185px;height:17px;background:#d0d0c0;"></div>
<div style="left:395px;top:817px;width:84px;height:17px;background:#78c678;"></div>
<div style="left:479px;top:817px;width:24px;height:17px;background:#b5b5b5;"></div>
<div style="left:503px;top:817px;width:180px;height:17px;background:#f1efd3;"></div>
<div style="left:504px;top:818px;width:179px;height:15px;background:#dcdcc6;"></div>
<span class="t" style="left:353.50px;top:816.65px;font-size:13px;line-height:20px;color:#000;font-weight:bold;letter-spacing:1.738px;">1.050</span>
<div style="left:0px;top:834px;width:126px;height:17px;background:#c0c0c0;"></div>
<div style="left:126px;top:834px;width:84px;height:17px;background:#fff185;"></div>
<div style="left:210px;top:834px;width:185px;height:17px;background:#dcdcc6;"></div>
<div style="left:395px;top:834px;width:84px;height:17px;background:#80d380;"></div>
<div style="left:479px;top:834px;width:24px;height:17px;background:#c0c0c0;"></div>
<div style="left:503px;top:834px;width:180px;height:17px;background:#f1efd3;"></div>
<div style="left:504px;top:835px;width:179px;height:15px;background:#dcdcc6;"></div>
<span class="t" style="left:357.50px;top:833.65px;font-size:13px;line-height:20px;color:#000;letter-spacing:0.738px;">1.040</span>
<div style="left:0px;top:851px;width:126px;height:17px;background:#b5b5b5;"></div>
<div style="left:126px;top:851px;width:84px;height:17px;background:#f2e47c;"></div>
<div style="left:210px;top:851px;width:185px;height:17px;background:#d0d0c0;"></div>
<div style="left:395px;top:851px;width:84px;height:17px;background:#78c678;"></div>
<div style="left:479px;top:851px;width:24px;height:17px;background:#b5b5b5;"></div>
<div style="left:503px;top:851px;width:180px;height:17px;background:#f1efd3;"></div>
<div style="left:504px;top:852px;width:179px;height:15px;background:#dcdcc6;"></div>
<span class="t" style="left:357.50px;top:850.65px;font-size:13px;line-height:20px;color:#000;letter-spacing:0.738px;">1.030</span>
<span class="t" style="left:173.60px;top:850.65px;font-size:13px;line-height:20px;color:#000;letter-spacing:0.463px;">2,000</span>
<div style="left:0px;top:868px;width:126px;height:17px;background:#c0c0c0;"></div>
<div style="left:126px;top:868px;width:84px;height:17px;background:#fff185;"></div>
<div style="left:210px;top:868px;width:185px;height:17px;background:#dcdcc6;"></div>
<div style="left:395px;top:868px;width:84px;height:17px;background:#80d380;"></div>
<div style="left:479px;top:868px;width:24px;height:17px;background:#c0c0c0;"></div>
<div style="left:503px;top:868px;width:180px;height:17px;background:#f1efd3;"></div>
<div style="left:504px;top:869px;width:179px;height:15px;background:#dcdcc6;"></div>
<span class="t" style="left:357.50px;top:867.65px;font-size:13px;line-height:20px;color:#000;letter-spacing:0.738px;">1.020</span>
<span class="t" style="left:173.60px;top:867.65px;font-size:13px;line-height:20px;color:#000;letter-spacing:0.463px;">8,000</span>
<div style="left:0px;top:885px;width:126px;height:17px;background:#b5b5b5;"></div>
<div style="left:126px;top:885px;width:84px;height:17px;background:#f2e47c;"></div>
<div style="left:210px;top:885px;width:185px;height:17px;background:#d0d0c0;"></div>
<div style="left:395px;top:885px;width:84px;height:17px;background:#78c678;"></div>
<div style="left:479px;top:885px;width:24px;height:17px;background:#b5b5b5;"></div>
<div style="left:503px;top:885px;width:180px;height:17px;background:#f1efd3;"></div>
<div style="left:504px;top:886px;width:179px;height:15px;background:#dcdcc6;"></div>
<span class="t" style="left:357.50px;top:884.65px;font-size:13px;line-height:20px;color:#000;letter-spacing:0.738px;">1.010</span>
<div style="left:0px;top:902px;width:126px;height:17px;background:#c0c0c0;"></div>
<div style="left:126px;top:902px;width:84px;height:17px;background:#fff185;"></div>
<div style="left:210px;top:902px;width:185px;height:17px;background:#dcdcc6;"></div>
<div style="left:395px;top:902px;width:84px;height:17px;background:#80d380;"></div>
<div style="left:479px;top:902px;width:24px;height:17px;background:#c0c0c0;"></div>
<div style="left:503px;top:902px;width:180px;height:17px;background:#f1efd3;"></div>
<div style="left:504px;top:903px;width:179px;height:15px;background:#dcdcc6;"></div>
<span class="t" style="left:353.50px;top:901.65px;font-size:13px;line-height:20px;color:#000;font-weight:bold;letter-spacing:1.738px;">1.000</span>
<span class="t" style="left:173.60px;top:901.65px;font-size:13px;line-height:20px;color:#000;letter-spacing:0.463px;">4,500</span>
<div style="left:0px;top:919px;width:126px;height:17px;background:#b5b5b5;"></div>
<div style="left:126px;top:919px;width:84px;height:17px;background:#f2e47c;"></div>
<div style="left:210px;top:919px;width:185px;height:17px;background:#d0d0c0;"></div>
<div style="left:395px;top:919px;width:84px;height:17px;background:#78c678;"></div>
<div style="left:479px;top:919px;width:24px;height:17px;background:#b5b5b5;"></div>
<div style="left:503px;top:919px;width:180px;height:17px;background:#f1efd3;"></div>
<div style="left:504px;top:920px;width:179px;height:15px;background:#dcdcc6;"></div>
<span class="t" style="left:357.50px;top:918.65px;font-size:13px;line-height:20px;color:#000;letter-spacing:0.738px;">0.990</span>
<span class="t" style="left:173.60px;top:918.65px;font-size:13px;line-height:20px;color:#000;letter-spacing:0.463px;">5,000</span>
<div style="left:0px;top:936px;width:126px;height:3px;background:#c0c0c0;"></div>
<div style="left:126px;top:936px;width:84px;height:3px;background:#fff185;"></div>
<div style="left:210px;top:936px;width:185px;height:3px;background:#dcdcc6;"></div>
<div style="left:395px;top:936px;width:84px;height:3px;background:#80d380;"></div>
<div style="left:479px;top:936px;width:24px;height:3px;background:#c0c0c0;"></div>
<div style="left:503px;top:936px;width:180px;height:3px;background:#f1efd3;"></div>
<div style="left:504px;top:937px;width:179px;height:15px;background:#dcdcc6;"></div>
<span class="t" style="left:357.50px;top:935.65px;font-size:13px;line-height:20px;color:#000;letter-spacing:0.738px;">0.980</span>
<svg style="position:absolute;left:683px;top:171px" width="14" height="768"><circle cx="7" cy="6.5" r="5.5" fill="#4a4a4a"/><path d="M3.5 8.5 L10.5 8.5 L7 4 Z" fill="#fff"/><rect x="6" y="13" width="2" height="747" fill="#333"/><rect x="3" y="58" width="8" height="660" rx="4" fill="#3c3c3c"/><circle cx="7" cy="763" r="5.5" fill="#4a4a4a"/><path d="M3.5 761 L10.5 761 L7 765.5 Z" fill="#fff"/></svg>
<div style="left:697px;top:0px;width:13px;height:939px;background:#231f20;"></div>
<div style="left:701px;top:0px;width:2px;height:939px;background:#2e2e2e;"></div>
<div style="left:703px;top:0px;width:1px;height:533px;background:#111;"></div>
<div style="left:704px;top:0px;width:6px;height:530px;background:#303030;"></div>
<div style="left:704px;top:526px;width:833px;height:4px;background:#262223;"></div>
<div style="left:703px;top:530px;width:834px;height:1px;background:#111;"></div>
<div style="left:710px;top:0px;width:827px;height:29px;background:#808185;"></div>
<div style="left:710px;top:29px;width:827px;height:497px;background:#000;"></div>
<div style="left:713px;top:6px;width:100px;height:16px;background:#fff;"></div>
<span class="t" style="left:713.50px;top:4.14px;font-size:12px;line-height:20px;color:#000;letter-spacing:-0.336px;">LEX</span>
<div style="left:823px;top:6px;width:149px;height:16px;background:#fff;"></div>
<span class="t" style="left:826.00px;top:4.14px;font-size:12px;line-height:20px;color:#000;letter-spacing:-0.169px;">1 day/Zeile</span>
<div style="left:957px;top:6px;width:15px;height:16px;background:#d8d8d8;"></div>
<svg style="position:absolute;left:957px;top:6px" width="15" height="16"><path d="M4 6 L11 6 L7.5 10 Z" fill="#000"/></svg>
<div style="left:980px;top:7px;width:2px;height:17px;background:#e0e0e0;"></div>
<span class="t" style="left:990.00px;top:5.15px;font-size:13px;line-height:20px;color:#1a1a1a;letter-spacing:-0.340px;">Datei</span>
<div style="left:990px;top:21px;width:9px;height:1px;background:#1a1a1a;"></div>
<span class="t" style="left:1039.00px;top:5.15px;font-size:13px;line-height:20px;color:#1a1a1a;letter-spacing:-0.188px;">Ändern</span>
<div style="left:1039px;top:21px;width:9px;height:1px;background:#1a1a1a;"></div>
<span class="t" style="left:1097.50px;top:5.15px;font-size:13px;line-height:20px;color:#1a1a1a;letter-spacing:-0.080px;">Annotate</span>
<div style="left:1098px;top:21px;width:9px;height:1px;background:#1a1a1a;"></div>
<span class="t" style="left:1167.00px;top:5.15px;font-size:13px;line-height:20px;color:#1a1a1a;letter-spacing:-0.273px;">Ansicht</span>
<div style="left:1176px;top:21px;width:7px;height:1px;background:#1a1a1a;"></div>
<div style="left:1216px;top:8px;width:2px;height:17px;background:#e0e0e0;"></div>
<svg style="position:absolute;left:0;top:0" width="1537" height="535"><line x1="782" y1="60.5" x2="1535" y2="60.5" stroke="#333333" stroke-dasharray="2,2"/><line x1="782" y1="94.5" x2="1535" y2="94.5" stroke="#333333" stroke-dasharray="2,2"/><line x1="782" y1="128.5" x2="1535" y2="128.5" stroke="#333333" stroke-dasharray="2,2"/><line x1="782" y1="163.5" x2="1535" y2="163.5" stroke="#333333" stroke-dasharray="2,2"/><line x1="782" y1="197.5" x2="1535" y2="197.5" stroke="#333333" stroke-dasharray="2,2"/><line x1="782" y1="231.5" x2="1535" y2="231.5" stroke="#333333" stroke-dasharray="2,2"/><line x1="782" y1="265.5" x2="1535" y2="265.5" stroke="#333333" stroke-dasharray="2,2"/><line x1="782" y1="299.5" x2="1535" y2="299.5" stroke="#333333" stroke-dasharray="2,2"/><line x1="782" y1="333.5" x2="1535" y2="333.5" stroke="#333333" stroke-dasharray="2,2"/><line x1="782" y1="368.5" x2="1535" y2="368.5" stroke="#333333" stroke-dasharray="2,2"/><line x1="839.5" y1="36" x2="839.5" y2="379" stroke="#333333" stroke-dasharray="2,2"/><line x1="897.5" y1="36" x2="897.5" y2="379" stroke="#333333" stroke-dasharray="2,2"/><line x1="955.5" y1="36" x2="955.5" y2="379" stroke="#333333" stroke-dasharray="2,2"/><line x1="1013.5" y1="36" x2="1013.5" y2="379" stroke="#333333" stroke-dasharray="2,2"/><line x1="1071.5" y1="36" x2="1071.5" y2="379" stroke="#333333" stroke-dasharray="2,2"/><line x1="1129.5" y1="36" x2="1129.5" y2="379" stroke="#333333" stroke-dasharray="2,2"/><line x1="1187.5" y1="36" x2="1187.5" y2="379" stroke="#333333" stroke-dasharray="2,2"/><line x1="1245.5" y1="36" x2="1245.5" y2="379" stroke="#333333" stroke-dasharray="2,2"/><line x1="1303.5" y1="36" x2="1303.5" y2="379" stroke="#333333" stroke-dasharray="2,2"/><line x1="1361.5" y1="36" x2="1361.5" y2="379" stroke="#333333" stroke-dasharray="2,2"/><line x1="1419.5" y1="36" x2="1419.5" y2="379" stroke="#333333" stroke-dasharray="2,2"/><line x1="1477.5" y1="36" x2="1477.5" y2="379" stroke="#333333" stroke-dasharray="2,2"/><line x1="782" y1="390.5" x2="1535" y2="390.5" stroke="#333333" stroke-dasharray="2,2"/><line x1="782" y1="408.5" x2="1535" y2="408.5" stroke="#333333" stroke-dasharray="2,2"/><line x1="782" y1="426.5" x2="1535" y2="426.5" stroke="#333333" stroke-dasharray="2,2"/><line x1="782" y1="444.5" x2="1535" y2="444.5" stroke="#333333" stroke-dasharray="2,2"/><line x1="782" y1="462.5" x2="1535" y2="462.5" stroke="#333333" stroke-dasharray="2,2"/><line x1="782" y1="481.5" x2="1535" y2="481.5" stroke="#333333" stroke-dasharray="2,2"/><line x1="839.5" y1="385" x2="839.5" y2="499" stroke="#333333" stroke-dasharray="2,2"/><line x1="839.5" y1="500" x2="839.5" y2="503" stroke="#a0a0a0"/><line x1="897.5" y1="385" x2="897.5" y2="499" stroke="#333333" stroke-dasharray="2,2"/><line x1="897.5" y1="500" x2="897.5" y2="503" stroke="#a0a0a0"/><line x1="955.5" y1="385" x2="955.5" y2="499" stroke="#333333" stroke-dasharray="2,2"/><line x1="955.5" y1="500" x2="955.5" y2="503" stroke="#a0a0a0"/><line x1="1013.5" y1="385" x2="1013.5" y2="499" stroke="#333333" stroke-dasharray="2,2"/><line x1="1013.5" y1="500" x2="1013.5" y2="503" stroke="#a0a0a0"/><line x1="1071.5" y1="385" x2="1071.5" y2="499" stroke="#333333" stroke-dasharray="2,2"/><line x1="1071.5" y1="500" x2="1071.5" y2="503" stroke="#a0a0a0"/><line x1="1129.5" y1="385" x2="1129.5" y2="499" stroke="#333333" stroke-dasharray="2,2"/><line x1="1129.5" y1="500" x2="1129.5" y2="503" stroke="#a0a0a0"/><line x1="1187.5" y1="385" x2="1187.5" y2="499" stroke="#333333" stroke-dasharray="2,2"/><line x1="1187.5" y1="500" x2="1187.5" y2="503" stroke="#a0a0a0"/><line x1="1245.5" y1="385" x2="1245.5" y2="499" stroke="#333333" stroke-dasharray="2,2"/><line x1="1245.5" y1="500" x2="1245.5" y2="503" stroke="#a0a0a0"/><line x1="1303.5" y1="385" x2="1303.5" y2="499" stroke="#333333" stroke-dasharray="2,2"/><line x1="1303.5" y1="500" x2="1303.5" y2="503" stroke="#a0a0a0"/><line x1="1361.5" y1="385" x2="1361.5" y2="499" stroke="#333333" stroke-dasharray="2,2"/><line x1="1361.5" y1="500" x2="1361.5" y2="503" stroke="#a0a0a0"/><line x1="1419.5" y1="385" x2="1419.5" y2="499" stroke="#333333" stroke-dasharray="2,2"/><line x1="1419.5" y1="500" x2="1419.5" y2="503" stroke="#a0a0a0"/><line x1="1477.5" y1="385" x2="1477.5" y2="499" stroke="#333333" stroke-dasharray="2,2"/><line x1="1477.5" y1="500" x2="1477.5" y2="503" stroke="#a0a0a0"/><path d="M781.5 35.5 H1535.5 V379.5 H781.5 Z" fill="none" stroke="#8a8a8a"/><path d="M781.5 384.5 H1535.5 V499.5 M781.5 384.5 V499.5 H1535.5" fill="none" stroke="#8a8a8a"/><line x1="778" y1="60.5" x2="781" y2="60.5" stroke="#8a8a8a"/><line x1="778" y1="94.5" x2="781" y2="94.5" stroke="#8a8a8a"/><line x1="778" y1="128.5" x2="781" y2="128.5" stroke="#8a8a8a"/><line x1="778" y1="163.5" x2="781" y2="163.5" stroke="#8a8a8a"/><line x1="778" y1="197.5" x2="781" y2="197.5" stroke="#8a8a8a"/><line x1="778" y1="231.5" x2="781" y2="231.5" stroke="#8a8a8a"/><line x1="778" y1="265.5" x2="781" y2="265.5" stroke="#8a8a8a"/><line x1="778" y1="299.5" x2="781" y2="299.5" stroke="#8a8a8a"/><line x1="778" y1="333.5" x2="781" y2="333.5" stroke="#8a8a8a"/><line x1="778" y1="368.5" x2="781" y2="368.5" stroke="#8a8a8a"/><line x1="778" y1="390.5" x2="781" y2="390.5" stroke="#8a8a8a"/><line x1="778" y1="408.5" x2="781" y2="408.5" stroke="#8a8a8a"/><line x1="778" y1="426.5" x2="781" y2="426.5" stroke="#8a8a8a"/><line x1="778" y1="444.5" x2="781" y2="444.5" stroke="#8a8a8a"/><line x1="778" y1="462.5" x2="781" y2="462.5" stroke="#8a8a8a"/><line x1="778" y1="481.5" x2="781" y2="481.5" stroke="#8a8a8a"/><rect x="785" y="484" width="2" height="15" fill="#ffff00"/><rect x="787" y="457" width="2" height="42" fill="#ff8c30"/><rect x="789" y="492" width="2" height="7" fill="#00e000"/><rect x="792" y="444" width="2" height="55" fill="#ff8c30"/><rect x="796" y="481" width="2" height="18" fill="#00e000"/><rect x="800" y="496" width="2" height="3" fill="#ffff00"/><rect x="814" y="451" width="2" height="48" fill="#ff8c30"/><rect x="818" y="463" width="2" height="36" fill="#ffff00"/><rect x="819" y="492" width="2" height="7" fill="#ff8c30"/><rect x="821" y="495" width="2" height="4" fill="#ffff00"/><rect x="833" y="496" width="2" height="3" fill="#ff8c30"/><rect x="835" y="495" width="2" height="4" fill="#00e000"/><rect x="839" y="496" width="2" height="3" fill="#ff8c30"/><rect x="841" y="477" width="2" height="22" fill="#00e000"/><rect x="843" y="477" width="2" height="22" fill="#00e000"/><rect x="845" y="459" width="2" height="40" fill="#ff8c30"/><rect x="848" y="496" width="2" height="3" fill="#00e000"/><rect x="852" y="481" width="2" height="18" fill="#ff8c30"/><rect x="854" y="496" width="2" height="3" fill="#00e000"/><rect x="856" y="496" width="2" height="3" fill="#00e000"/><rect x="858" y="481" width="2" height="18" fill="#ffff00"/><rect x="862" y="477" width="2" height="22" fill="#ff8c30"/><rect x="864" y="474" width="2" height="25" fill="#00e000"/><rect x="870" y="494" width="2" height="5" fill="#ff8c30"/><rect x="874" y="492" width="2" height="7" fill="#ff8c30"/><rect x="876" y="446" width="2" height="53" fill="#ff8c30"/><rect x="880" y="498" width="2" height="1" fill="#ff8c30"/><rect x="885" y="481" width="2" height="18" fill="#00e000"/><rect x="889" y="492" width="2" height="7" fill="#00e000"/><rect x="893" y="496" width="2" height="3" fill="#ffff00"/><rect x="895" y="481" width="2" height="18" fill="#ffff00"/><rect x="897" y="488" width="2" height="11" fill="#ffff00"/><rect x="899" y="475" width="2" height="24" fill="#ff8c30"/><rect x="903" y="490" width="2" height="9" fill="#00e000"/><rect x="912" y="486" width="2" height="13" fill="#ffff00"/><rect x="914" y="481" width="2" height="18" fill="#ffff00"/><rect x="916" y="434" width="2" height="65" fill="#ff8c30"/><rect x="918" y="488" width="2" height="11" fill="#ffff00"/><rect x="924" y="486" width="2" height="13" fill="#ffff00"/><rect x="928" y="497" width="2" height="2" fill="#ff8c30"/><rect x="930" y="461" width="2" height="38" fill="#00e000"/><rect x="932" y="462" width="2" height="37" fill="#00e000"/><rect x="934" y="493" width="2" height="6" fill="#ff8c30"/><rect x="939" y="496" width="2" height="3" fill="#00e000"/><rect x="941" y="485" width="2" height="14" fill="#00e000"/><rect x="945" y="494" width="2" height="5" fill="#00e000"/><rect x="947" y="485" width="2" height="14" fill="#ff8c30"/><rect x="949" y="492" width="2" height="7" fill="#00e000"/><rect x="953" y="492" width="2" height="7" fill="#00e000"/><rect x="972" y="490" width="2" height="9" fill="#ff8c30"/><rect x="976" y="488" width="2" height="11" fill="#ff8c30"/><rect x="984" y="487" width="2" height="12" fill="#00e000"/><rect x="995" y="496" width="2" height="3" fill="#ff8c30"/><rect x="997" y="492" width="2" height="7" fill="#ffff00"/><rect x="1013" y="481" width="2" height="18" fill="#00e000"/><rect x="1015" y="487" width="2" height="12" fill="#ffff00"/><rect x="1017" y="497" width="2" height="2" fill="#ffff00"/><rect x="1022" y="476" width="2" height="23" fill="#ff8c30"/><rect x="1024" y="488" width="2" height="11" fill="#ffff00"/><rect x="1026" y="485" width="2" height="14" fill="#ff8c30"/><rect x="1032" y="390" width="2" height="109" fill="#00e000"/><rect x="1036" y="445" width="2" height="54" fill="#ff8c30"/><rect x="1040" y="483" width="2" height="16" fill="#ff8c30"/><rect x="1044" y="489" width="2" height="10" fill="#ff8c30"/><rect x="1046" y="488" width="2" height="11" fill="#ffff00"/><rect x="1051" y="453" width="2" height="46" fill="#00e000"/><rect x="1055" y="492" width="2" height="7" fill="#00e000"/><rect x="1061" y="496" width="2" height="3" fill="#ff8c30"/><rect x="1079" y="487" width="2" height="12" fill="#ff8c30"/><rect x="1082" y="498" width="2" height="1" fill="#00e000"/><rect x="1104" y="496" width="2" height="3" fill="#00e000"/><rect x="1108" y="463" width="2" height="36" fill="#00e000"/><rect x="1109" y="497" width="2" height="2" fill="#00e000"/><rect x="1115" y="447" width="2" height="52" fill="#ffff00"/><rect x="1119" y="470" width="2" height="29" fill="#ffff00"/><rect x="1131" y="488" width="2" height="11" fill="#ff8c30"/><rect x="1133" y="496" width="2" height="3" fill="#ff8c30"/><rect x="1140" y="485" width="2" height="14" fill="#ff8c30"/><rect x="1152" y="483" width="2" height="16" fill="#ffff00"/><rect x="1160" y="491" width="2" height="8" fill="#ff8c30"/><rect x="1162" y="497" width="2" height="2" fill="#ffff00"/><rect x="1164" y="472" width="2" height="27" fill="#00e000"/><rect x="1167" y="497" width="2" height="2" fill="#ff8c30"/><rect x="1169" y="496" width="2" height="3" fill="#00e000"/><rect x="1173" y="492" width="2" height="7" fill="#ffff00"/><rect x="1198" y="497" width="2" height="2" fill="#ffff00"/><rect x="1222" y="436" width="2" height="63" fill="#ff8c30"/><rect x="1252" y="411" width="2" height="88" fill="#ff8c30"/><rect x="1258" y="463" width="2" height="36" fill="#ff8c30"/><rect x="1260" y="481" width="2" height="18" fill="#00e000"/><rect x="1266" y="481" width="2" height="18" fill="#ffff00"/><rect x="1270" y="494" width="2" height="5" fill="#ff8c30"/><rect x="1272" y="459" width="2" height="40" fill="#ffff00"/><rect x="1276" y="485" width="2" height="14" fill="#00e000"/><rect x="1278" y="476" width="2" height="23" fill="#ffff00"/><rect x="1293" y="463" width="2" height="36" fill="#ffff00"/><rect x="1295" y="488" width="2" height="11" fill="#ffff00"/><rect x="1309" y="495" width="2" height="4" fill="#ffff00"/><rect x="1316" y="490" width="2" height="9" fill="#ffff00"/><rect x="1324" y="483" width="2" height="16" fill="#ffff00"/><rect x="1328" y="488" width="2" height="11" fill="#ff8c30"/><rect x="1332" y="496" width="2" height="3" fill="#ffff00"/><rect x="1343" y="496" width="2" height="3" fill="#ffff00"/><rect x="1345" y="481" width="2" height="18" fill="#ffff00"/><rect x="1361" y="492" width="2" height="7" fill="#ffff00"/><rect x="1363" y="492" width="2" height="7" fill="#ffff00"/><rect x="1370" y="490" width="2" height="9" fill="#ffff00"/><rect x="1378" y="485" width="2" height="14" fill="#00e000"/><rect x="1380" y="492" width="2" height="7" fill="#00e000"/><rect x="1384" y="470" width="2" height="29" fill="#ffff00"/><rect x="1386" y="429" width="2" height="70" fill="#ff8c30"/><rect x="1388" y="492" width="2" height="7" fill="#ffff00"/><rect x="1392" y="426" width="2" height="73" fill="#ffff00"/><rect x="1394" y="463" width="2" height="36" fill="#ffff00"/><rect x="1411" y="492" width="2" height="7" fill="#ffff00"/><rect x="1428" y="481" width="2" height="18" fill="#ffff00"/><rect x="1432" y="493" width="2" height="6" fill="#ffff00"/><rect x="1438" y="498" width="2" height="1" fill="#ffff00"/><rect x="1442" y="470" width="2" height="29" fill="#ffff00"/><rect x="1444" y="481" width="2" height="18" fill="#ffff00"/><rect x="1452" y="466" width="2" height="33" fill="#ff8c30"/><rect x="1463" y="488" width="2" height="11" fill="#00e000"/><rect x="1465" y="390" width="2" height="109" fill="#ff8c30"/><rect x="1467" y="384" width="2" height="115" fill="#ff8c30"/><rect x="1488" y="483" width="2" height="16" fill="#00e000"/><rect x="1490" y="487" width="2" height="12" fill="#00e000"/><rect x="1494" y="492" width="2" height="7" fill="#ffff00"/><rect x="1502" y="481" width="2" height="18" fill="#ff8c30"/><rect x="1504" y="492" width="2" height="7" fill="#ffff00"/><rect x="1506" y="492" width="2" height="7" fill="#00e000"/><rect x="1521" y="470" width="2" height="29" fill="#00e000"/><rect x="1523" y="481" width="2" height="18" fill="#ffff00"/><rect x="1527" y="481" width="2" height="18" fill="#00e000"/><path d="M785.5 53.5 L788.5 136.5 L789.5 112.5 L791.5 168.5 L793.5 169.5 L795.5 178.5 L799.5 170.5 L813.5 170.5 L814.5 265.5 L818.5 265.5 L820.5 281.5 L832.5 281.5 L834.5 284.5 L836.5 281.5 L838.5 281.5 L840.5 284.5 L842.5 279.5 L843.5 277.5 L845.5 294.5 L848.5 295.5 L850.5 292.5 L851.5 292.5 L854.5 306.5 L855.5 305.5 L857.5 292.5 L861.5 292.5 L864.5 311.5 L868.5 295.5 L870.5 295.5 L870.5 317.5 L873.5 317.5 L874.5 320.5 L876.5 333.5 L879.5 333.5 L884.5 339.5 L885.5 339.5 L887.5 325.5 L889.5 325.5 L891.5 323.5 L899.5 323.5 L901.5 328.5 L903.5 323.5 L915.5 324.5 L917.5 325.5 L928.5 325.5 L929.5 328.5 L933.5 260.5 L934.5 344.5 L938.5 344.5 L940.5 328.5 L942.5 325.5 L944.5 325.5 L947.5 306.5 L948.5 342.5 L950.5 337.5 L952.5 336.5 L955.5 325.5 L971.5 325.5 L974.5 333.5 L976.5 333.5 L978.5 339.5 L983.5 339.5 L986.5 333.5 L995.5 333.5 L997.5 336.5 L1011.5 336.5 L1013.5 340.5 L1014.5 260.5 L1022.5 260.5 L1023.5 333.5 L1025.5 333.5 L1028.5 342.5 L1031.5 342.5 L1035.5 328.5 L1038.5 339.5 L1040.5 340.5 L1045.5 344.5 L1047.5 344.5 L1049.5 336.5 L1050.5 336.5 L1052.5 323.5 L1054.5 337.5 L1059.5 331.5 L1062.5 333.5 L1077.5 333.5 L1079.5 338.5 L1083.5 333.5 L1087.5 333.5 L1090.5 336.5 L1102.5 336.5 L1104.5 333.5 L1107.5 333.5 L1111.5 328.5 L1128.5 328.5 L1130.5 325.5 L1134.5 331.5 L1139.5 331.5 L1142.5 333.5 L1159.5 333.5 L1161.5 339.5 L1165.5 336.5 L1166.5 336.5 L1169.5 340.5 L1171.5 336.5 L1221.5 336.5 L1222.5 339.5 L1252.5 339.5 L1254.5 342.5 L1257.5 342.5 L1259.5 344.5 L1261.5 339.5 L1270.5 339.5 L1272.5 342.5 L1274.5 342.5 L1277.5 339.5 L1327.5 339.5 L1329.5 342.5 L1377.5 342.5 L1381.5 333.5 L1385.5 333.5 L1387.5 344.5 L1450.5 344.5 L1452.5 347.5 L1462.5 347.5 L1464.5 344.5 L1466.5 347.5 L1470.5 364.5 L1487.5 364.5 L1491.5 347.5 L1501.5 347.5 L1504.5 356.5 L1506.5 353.5 L1521.5 353.5 L1522.5 344.5 L1527.5 344.5 L1529.5 339.5 L1535.5 339.5" fill="none" stroke="#00e4c0" stroke-width="1.15" stroke-linejoin="round"/><rect x="1407" y="49" width="114" height="17" fill="rgba(60,60,60,0.55)"/><rect x="1416" y="56" width="17" height="2" fill="#30e0c0"/><rect x="783" y="386" width="59" height="13" fill="rgba(60,60,60,0.55)"/><rect x="713" y="35" width="8" height="325" fill="#8a8a8a"/><rect x="713" y="148" width="8" height="100" fill="#4a4a4a"/><rect x="713" y="147" width="8" height="2" fill="#eee"/><rect x="713" y="247" width="8" height="2" fill="#eee"/><rect x="714" y="36" width="6" height="8" fill="#c8c8c8"/><path d="M715 43 L719 43 L717 38 Z" fill="#333"/><rect x="714" y="352" width="6" height="8" fill="#c8c8c8"/><path d="M715 353 L719 353 L717 358 Z" fill="#333"/><path d="M713.5 373 V368 A3 3 0 0 1 719.5 368" fill="none" stroke="#ddd" stroke-width="1.5"/><rect x="713" y="371" width="8" height="6" fill="#ddd"/><path d="M713 389 L720 396 M720 389 L713 396" stroke="#ddd" stroke-width="2.2"/><rect x="710" y="516" width="827" height="10" fill="#8a8a8a"/><rect x="1368" y="516" width="156" height="10" fill="#454545"/><rect x="710" y="516" width="10" height="10" fill="#e0e0e0"/><path d="M718 518 L712 521 L718 524 Z" fill="#333"/><rect x="1367" y="516" width="2" height="10" fill="#f0f0f0"/><rect x="1524" y="516" width="13" height="10" fill="#8a8a8a"/><rect x="1524" y="516" width="2" height="10" fill="#f0f0f0"/><path d="M1528 518 L1536 521 L1528 524 Z" fill="#333"/></svg>
<span class="t" style="left:749.00px;top:51.62px;font-size:10px;line-height:20px;color:#00ecc4;letter-spacing:0.192px;">2.250</span>
<span class="t" style="left:749.00px;top:85.61px;font-size:10px;line-height:20px;color:#00ecc4;letter-spacing:0.192px;">2.125</span>
<span class="t" style="left:749.00px;top:119.61px;font-size:10px;line-height:20px;color:#00ecc4;letter-spacing:0.192px;">2.000</span>
<span class="t" style="left:749.00px;top:154.62px;font-size:10px;line-height:20px;color:#00ecc4;letter-spacing:0.192px;">1.875</span>
<span class="t" style="left:749.00px;top:188.62px;font-size:10px;line-height:20px;color:#00ecc4;letter-spacing:0.192px;">1.750</span>
<span class="t" style="left:749.00px;top:222.62px;font-size:10px;line-height:20px;color:#00ecc4;letter-spacing:0.192px;">1.625</span>
<span class="t" style="left:749.00px;top:256.62px;font-size:10px;line-height:20px;color:#00ecc4;letter-spacing:0.192px;">1.500</span>
<span class="t" style="left:749.00px;top:290.62px;font-size:10px;line-height:20px;color:#00ecc4;letter-spacing:0.192px;">1.375</span>
<span class="t" style="left:749.00px;top:325.31px;font-size:10px;line-height:20px;color:#00ecc4;letter-spacing:0.192px;">1.250</span>
<span class="t" style="left:749.00px;top:359.62px;font-size:10px;line-height:20px;color:#00ecc4;letter-spacing:0.192px;">1.125</span>
<div style="left:748px;top:333px;width:27px;height:13px;background:#ffff00;"></div>
<span class="t" style="left:749.10px;top:330.62px;font-size:10px;line-height:20px;color:#000;letter-spacing:0.117px;">1.230</span>
<span class="t" style="left:746.70px;top:381.62px;font-size:10px;line-height:20px;color:#00ecc4;letter-spacing:0.665px;">30.0K</span>
<span class="t" style="left:746.70px;top:399.62px;font-size:10px;line-height:20px;color:#00ecc4;letter-spacing:0.665px;">25.0K</span>
<span class="t" style="left:746.70px;top:417.62px;font-size:10px;line-height:20px;color:#00ecc4;letter-spacing:0.665px;">20.0K</span>
<span class="t" style="left:746.70px;top:435.62px;font-size:10px;line-height:20px;color:#00ecc4;letter-spacing:0.665px;">15.0K</span>
<span class="t" style="left:746.70px;top:453.62px;font-size:10px;line-height:20px;color:#00ecc4;letter-spacing:0.665px;">10.0K</span>
<span class="t" style="left:753.50px;top:472.62px;font-size:10px;line-height:20px;color:#00ecc4;letter-spacing:0.474px;">5.0K</span>
<span class="t" style="left:716px;top:197px;width:40px;text-align:center;line-height:20px;font-size:12.7px;color:#00ecc4;transform:rotate(-90deg)">Preis</span>
<span class="t" style="left:705px;top:431.5px;width:60px;text-align:center;line-height:20px;font-size:12.3px;color:#00ecc4;transform:rotate(-90deg)">Volumen</span>
<span class="t" style="left:826.75px;top:500.62px;font-size:10px;line-height:20px;color:#00ecc4;letter-spacing:0.117px;">10:00</span>
<span class="t" style="left:884.75px;top:500.62px;font-size:10px;line-height:20px;color:#00ecc4;letter-spacing:0.117px;">10:30</span>
<span class="t" style="left:942.75px;top:500.62px;font-size:10px;line-height:20px;color:#00ecc4;letter-spacing:0.301px;">11:00</span>
<span class="t" style="left:1000.75px;top:500.62px;font-size:10px;line-height:20px;color:#00ecc4;letter-spacing:0.301px;">11:30</span>
<span class="t" style="left:1058.75px;top:500.62px;font-size:10px;line-height:20px;color:#00ecc4;letter-spacing:0.117px;">12:00</span>
<span class="t" style="left:1116.75px;top:500.62px;font-size:10px;line-height:20px;color:#00ecc4;letter-spacing:0.117px;">12:30</span>
<span class="t" style="left:1174.75px;top:500.62px;font-size:10px;line-height:20px;color:#00ecc4;letter-spacing:0.117px;">13:00</span>
<span class="t" style="left:1232.75px;top:500.62px;font-size:10px;line-height:20px;color:#00ecc4;letter-spacing:0.117px;">13:30</span>
<span class="t" style="left:1290.75px;top:500.62px;font-size:10px;line-height:20px;color:#00ecc4;letter-spacing:0.117px;">14:00</span>
<span class="t" style="left:1348.75px;top:500.62px;font-size:10px;line-height:20px;color:#00ecc4;letter-spacing:0.117px;">14:30</span>
<span class="t" style="left:1406.75px;top:500.62px;font-size:10px;line-height:20px;color:#00ecc4;letter-spacing:0.117px;">15:00</span>
<span class="t" style="left:1464.75px;top:500.62px;font-size:10px;line-height:20px;color:#00ecc4;letter-spacing:0.117px;">15:30</span>
<span class="t" style="left:1436.50px;top:48.32px;font-size:10px;line-height:20px;color:#fff;font-weight:bold;letter-spacing:-0.094px;-webkit-text-stroke:0.3px #fff;">LEX@SMART</span>
<span class="t" style="left:791.00px;top:382.62px;font-size:10px;line-height:20px;color:#fff;font-weight:bold;letter-spacing:0.083px;-webkit-text-stroke:0.3px #fff;">Volumen</span>
<span class="t" style="left:877.25px;top:511.13px;font-size:11px;line-height:20px;color:#ffffff;letter-spacing:-0.031px;">'12/29</span>
<span class="t" style="left:1036.25px;top:511.13px;font-size:11px;line-height:20px;color:#ffffff;letter-spacing:-0.031px;">'12/30</span>
<span class="t" style="left:1194.25px;top:511.13px;font-size:11px;line-height:20px;color:#ffffff;letter-spacing:-0.031px;">'01/03</span>
<span class="t" style="left:1371.00px;top:511.13px;font-size:11px;line-height:20px;color:#f0f0f0;letter-spacing:-0.391px;">01/04</span>
<div style="left:705px;top:533px;width:832px;height:406px;background:#231f20;"></div>
<div style="left:705px;top:536px;width:832px;height:24px;background:#58595b;"></div>
<span class="t" style="left:730.50px;top:538.64px;font-size:12px;line-height:20px;color:#f4f4f4;font-weight:bold;letter-spacing:-0.089px;">LEX@SMART - [14:30 ... Jetzt] - Östliche Normalzeit - Time &amp; Sales</span>
<svg style="position:absolute;left:1366px;top:536px" width="171" height="24"><rect x="7" y="5" width="7" height="2" fill="#6a9ac0"/><rect x="9" y="6" width="3" height="8" fill="#6a9ac0"/><rect x="6" y="12" width="9" height="3" fill="#6a9ac0"/><rect x="10" y="15" width="1" height="6" fill="#222"/><path d="M27 7 L34 6 L37 11 L30 12 Z" fill="#e8f0f8"/><rect x="25" y="11" width="15" height="7" rx="2" fill="#e8e8e8"/><rect x="27" y="17" width="11" height="3" fill="#bbb"/><rect x="52" y="6" width="8" height="8" fill="#777"/><rect x="49" y="12" width="7" height="9" fill="#666"/><rect x="56" y="13" width="8" height="8" fill="#555"/><path d="M67 11 L74 11 L70.5 15 Z" fill="#999"/><rect x="104" y="15" width="16" height="5" fill="#6a8ab0"/><rect x="104" y="16" width="16" height="2" fill="#c8d8e8"/><rect x="128" y="6" width="16" height="14" fill="#eef0f4"/><rect x="128" y="6" width="16" height="2" fill="#5a7a9a"/><rect x="152" y="6" width="16" height="14" fill="#7e3a2e"/><path d="M156 10 L164 17 M164 10 L156 17" stroke="#fff" stroke-width="2.2"/></svg>
<span class="t" style="left:714.50px;top:566.15px;font-size:13px;line-height:20px;color:#ebebeb;letter-spacing:-0.090px;">Datei</span>
<div style="left:714px;top:582px;width:9px;height:1px;background:#ebebeb;"></div>
<span class="t" style="left:763.00px;top:566.15px;font-size:13px;line-height:20px;color:#ebebeb;letter-spacing:-0.266px;">Einstellen</span>
<div style="left:763px;top:582px;width:9px;height:1px;background:#ebebeb;"></div>
<span class="t" style="left:733.00px;top:592.14px;font-size:12px;line-height:20px;color:#f0f0f0;letter-spacing:0.264px;">Vorhergehendes</span>
<span class="t" style="left:855.00px;top:592.14px;font-size:12px;line-height:20px;color:#8a8a8a;letter-spacing:0.283px;">Nächster</span>
<span class="t" style="left:935.00px;top:592.14px;font-size:12px;line-height:20px;color:#f0f0f0;letter-spacing:-0.207px;">Jetzt</span>
<span class="t" style="left:989.30px;top:592.14px;font-size:12px;line-height:20px;color:#f0f0f0;letter-spacing:0.027px;">Zeitperiode verändern...</span>
<span class="t" style="left:1149.00px;top:592.14px;font-size:12px;line-height:20px;color:#f0f0f0;letter-spacing:0.092px;">Umkehren</span>
<span class="t" style="left:1259.00px;top:592.14px;font-size:12px;line-height:20px;color:#f0f0f0;letter-spacing:-0.115px;">Einstellen</span>
<div style="left:708px;top:614px;width:829px;height:52px;background:#808185;"></div>
<svg style="position:absolute;left:711px;top:616px" width="12" height="12"><circle cx="6" cy="6" r="5" fill="#4a4a4a"/><path d="M3 5 L9 5 L6 9 Z" fill="#fff"/></svg>
<span class="t" style="left:726.00px;top:612.65px;font-size:13px;line-height:20px;color:#f4f4f4;font-weight:bold;letter-spacing:0.043px;">Kurs Tafel</span>
<div style="left:794px;top:622px;width:716px;height:1px;background:#f0f0f0;"></div>
<div style="left:711px;top:631px;width:826px;height:16px;background:#707175;"></div>
<span class="t" style="left:715.00px;top:629.65px;font-size:13px;line-height:20px;color:#f4f4f4;letter-spacing:0.481px;">Underlying</span>
<span class="t" style="left:801.00px;top:629.65px;font-size:13px;line-height:20px;color:#f4f4f4;letter-spacing:0.452px;">Beschreibung</span>
<span class="t" style="left:927.00px;top:629.65px;font-size:13px;line-height:20px;color:#f4f4f4;letter-spacing:0.807px;">Last</span>
<span class="t" style="left:982.00px;top:629.65px;font-size:13px;line-height:20px;color:#f4f4f4;letter-spacing:0.580px;">Verände...</span>
<span class="t" style="left:1079.00px;top:629.65px;font-size:13px;line-height:20px;color:#f4f4f4;letter-spacing:-0.148px;">Bid</span>
<span class="t" style="left:1144.00px;top:629.65px;font-size:13px;line-height:20px;color:#f4f4f4;letter-spacing:-0.086px;">Ask</span>
<span class="t" style="left:1191.00px;top:629.65px;font-size:13px;line-height:20px;color:#f4f4f4;letter-spacing:0.491px;">Position</span>
<span class="t" style="left:1268.00px;top:629.65px;font-size:13px;line-height:20px;color:#f4f4f4;letter-spacing:0.080px;">Hoch</span>
<span class="t" style="left:1346.00px;top:629.65px;font-size:13px;line-height:20px;color:#f4f4f4;letter-spacing:0.515px;">Volumen</span>
<span class="t" style="left:1463.00px;top:629.65px;font-size:13px;line-height:20px;color:#f4f4f4;letter-spacing:0.343px;">Trades</span>
<div style="left:711px;top:647px;width:189px;height:17px;background:#ecebd2;"></div>
<div style="left:900px;top:647px;width:637px;height:17px;background:#000;"></div>
<div style="left:1183px;top:647px;width:66px;height:17px;background:#3a1a2e;"></div>
<span class="t" style="left:714.50px;top:646.15px;font-size:13px;line-height:20px;color:#000;letter-spacing:-1.289px;">LEX</span>
<span class="t" style="left:789.40px;top:646.15px;font-size:13px;line-height:20px;color:#000;letter-spacing:-0.006px;">Stock (TSE)</span>
<span class="t" style="left:940.90px;top:646.15px;font-size:13px;line-height:20px;color:#00e000;letter-spacing:0.688px;">1.230</span>
<span class="t" style="left:1088.20px;top:646.15px;font-size:13px;line-height:20px;color:#ff8c30;letter-spacing:0.688px;">1.210</span>
<span class="t" style="left:1144.30px;top:646.15px;font-size:13px;line-height:20px;color:#ff8c30;letter-spacing:0.688px;">1.230</span>
<span class="t" style="left:1278.90px;top:646.15px;font-size:13px;line-height:20px;color:#ffff00;letter-spacing:0.688px;">2.280</span>
<span class="t" style="left:1366.50px;top:646.15px;font-size:13px;line-height:20px;color:#ffff00;letter-spacing:0.516px;">683,102K</span>
<span class="t" style="left:1514.20px;top:646.15px;font-size:13px;line-height:20px;color:#ffff00;letter-spacing:0.548px;">298</span>
<svg style="position:absolute;left:708px;top:666px" width="829" height="25"><path d="M0 21 V5 H13.5 A18 16 0 0 1 31.5 21 Z" fill="#808185"/><path d="M829 21 V5 H819 A18 16 0 0 0 801.5 21 Z" fill="#808185"/><rect x="0" y="21" width="829" height="4" fill="#808185"/></svg>
<div style="left:708px;top:691px;width:5px;height:230px;background:#808185;"></div>
<div style="left:713px;top:691px;width:824px;height:16px;background:#ffffff;"></div>
<span class="t" style="left:761.30px;top:689.65px;font-size:13px;line-height:20px;color:#000;letter-spacing:0.443px;">Zeit</span>
<span class="t" style="left:858.00px;top:689.65px;font-size:13px;line-height:20px;color:#000;letter-spacing:0.387px;">Bid-Volumen</span>
<span class="t" style="left:984.00px;top:689.65px;font-size:13px;line-height:20px;color:#000;letter-spacing:-0.198px;">Bid</span>
<span class="t" style="left:1078.00px;top:689.65px;font-size:13px;line-height:20px;color:#000;letter-spacing:0.164px;">Ask</span>
<span class="t" style="left:1144.70px;top:689.65px;font-size:13px;line-height:20px;color:#000;letter-spacing:0.399px;">Ask-Volumen</span>
<span class="t" style="left:1268.90px;top:689.65px;font-size:13px;line-height:20px;color:#000;letter-spacing:0.707px;">Last</span>
<span class="t" style="left:1333.00px;top:689.65px;font-size:13px;line-height:20px;color:#000;letter-spacing:0.668px;">letztes geha...</span>
<span class="t" style="left:1448.00px;top:689.65px;font-size:13px;line-height:20px;color:#000;letter-spacing:0.515px;">Volumen</span>
<svg style="position:absolute;left:789px;top:693px" width="12" height="12"><circle cx="6" cy="6" r="5" fill="#b8b8b8"/><path d="M3.5 7.5 L8.5 7.5 L6 4 Z" fill="#fff"/></svg>
<div style="left:713px;top:707px;width:810px;height:214px;overflow:hidden">
<div style="left:0px;top:0px;width:810px;height:17px;background:#000;"></div>
<span class="t" style="left:24.00px;top:-0.05px;font-size:13px;line-height:20px;color:#fff;letter-spacing:0.899px;">15:57:52 EST</span>
<span class="t" style="left:192.70px;top:-0.05px;font-size:13px;line-height:20px;color:#00e000;letter-spacing:0.688px;">8,000</span>
<span class="t" style="left:747.40px;top:-0.05px;font-size:13px;line-height:20px;color:#fff;letter-spacing:0.516px;">683,102K</span>
<div style="left:0px;top:17px;width:810px;height:17px;background:#505050;"></div>
<span class="t" style="left:24.00px;top:16.95px;font-size:13px;line-height:20px;color:#fff;letter-spacing:0.899px;">15:56:55 EST</span>
<span class="t" style="left:482.70px;top:16.95px;font-size:13px;line-height:20px;color:#00e000;letter-spacing:0.688px;">1,900</span>
<span class="t" style="left:747.40px;top:16.95px;font-size:13px;line-height:20px;color:#fff;letter-spacing:0.516px;">683,102K</span>
<div style="left:0px;top:34px;width:810px;height:17px;background:#000;"></div>
<span class="t" style="left:24.00px;top:33.95px;font-size:13px;line-height:20px;color:#fff;letter-spacing:0.899px;">15:56:32 EST</span>
<span class="t" style="left:192.70px;top:33.95px;font-size:13px;line-height:20px;color:#00e000;letter-spacing:0.688px;">7,000</span>
<span class="t" style="left:289.20px;top:33.95px;font-size:13px;line-height:20px;color:#ff8c30;letter-spacing:0.688px;">1.210</span>
<span class="t" style="left:385.70px;top:33.95px;font-size:13px;line-height:20px;color:#ff8c30;letter-spacing:0.688px;">1.230</span>
<span class="t" style="left:482.70px;top:33.95px;font-size:13px;line-height:20px;color:#ff8c30;letter-spacing:0.688px;">1,400</span>
<span class="t" style="left:747.40px;top:33.95px;font-size:13px;line-height:20px;color:#fff;letter-spacing:0.516px;">683,102K</span>
<div style="left:0px;top:51px;width:810px;height:17px;background:#505050;"></div>
<span class="t" style="left:24.00px;top:50.95px;font-size:13px;line-height:20px;color:#fff;letter-spacing:0.899px;">15:56:32 EST</span>
<span class="t" style="left:577.70px;top:50.95px;font-size:13px;line-height:20px;color:#ffff00;letter-spacing:0.688px;">1.230</span>
<span class="t" style="left:675.00px;top:50.95px;font-size:13px;line-height:20px;color:#00e000;letter-spacing:0.688px;">4,500</span>
<span class="t" style="left:747.40px;top:50.95px;font-size:13px;line-height:20px;color:#fff;letter-spacing:0.516px;">678,602K</span>
<div style="left:0px;top:68px;width:810px;height:17px;background:#000;"></div>
<span class="t" style="left:24.00px;top:67.95px;font-size:13px;line-height:20px;color:#fff;letter-spacing:0.899px;">15:56:20 EST</span>
<span class="t" style="left:192.70px;top:67.95px;font-size:13px;line-height:20px;color:#ff8c30;letter-spacing:0.688px;">4,500</span>
<span class="t" style="left:289.20px;top:67.95px;font-size:13px;line-height:20px;color:#00e000;letter-spacing:0.688px;">1.230</span>
<span class="t" style="left:385.70px;top:67.95px;font-size:13px;line-height:20px;color:#00e000;letter-spacing:0.688px;">1.240</span>
<span class="t" style="left:482.70px;top:67.95px;font-size:13px;line-height:20px;color:#00e000;letter-spacing:0.688px;">7,900</span>
<span class="t" style="left:747.40px;top:67.95px;font-size:13px;line-height:20px;color:#fff;letter-spacing:0.516px;">678,602K</span>
<div style="left:0px;top:85px;width:810px;height:17px;background:#505050;"></div>
<span class="t" style="left:24.00px;top:84.95px;font-size:13px;line-height:20px;color:#fff;letter-spacing:0.899px;">15:56:20 EST</span>
<span class="t" style="left:577.70px;top:84.95px;font-size:13px;line-height:20px;color:#00e000;letter-spacing:0.688px;">1.230</span>
<span class="t" style="left:687.50px;top:84.95px;font-size:13px;line-height:20px;color:#ff8c30;letter-spacing:0.548px;">500</span>
<span class="t" style="left:747.40px;top:84.95px;font-size:13px;line-height:20px;color:#fff;letter-spacing:0.516px;">678,102K</span>
<div style="left:0px;top:102px;width:810px;height:17px;background:#000;"></div>
<span class="t" style="left:24.00px;top:101.95px;font-size:13px;line-height:20px;color:#fff;letter-spacing:0.899px;">15:55:27 EST</span>
<span class="t" style="left:385.70px;top:101.95px;font-size:13px;line-height:20px;color:#ff8c30;letter-spacing:0.688px;">1.230</span>
<span class="t" style="left:495.20px;top:101.95px;font-size:13px;line-height:20px;color:#ff8c30;letter-spacing:0.548px;">500</span>
<span class="t" style="left:747.40px;top:101.95px;font-size:13px;line-height:20px;color:#fff;letter-spacing:0.516px;">678,102K</span>
<div style="left:0px;top:119px;width:810px;height:17px;background:#505050;"></div>
<span class="t" style="left:24.00px;top:118.95px;font-size:13px;line-height:20px;color:#fff;letter-spacing:0.899px;">15:54:40 EST</span>
<span class="t" style="left:192.70px;top:118.95px;font-size:13px;line-height:20px;color:#00e000;letter-spacing:0.688px;">7,000</span>
<span class="t" style="left:747.40px;top:118.95px;font-size:13px;line-height:20px;color:#fff;letter-spacing:0.516px;">678,102K</span>
<div style="left:0px;top:136px;width:810px;height:17px;background:#000;"></div>
<span class="t" style="left:24.00px;top:135.95px;font-size:13px;line-height:20px;color:#fff;letter-spacing:0.899px;">15:54:15 EST</span>
<span class="t" style="left:192.70px;top:135.95px;font-size:13px;line-height:20px;color:#ff8c30;letter-spacing:0.688px;">5,000</span>
<span class="t" style="left:747.40px;top:135.95px;font-size:13px;line-height:20px;color:#fff;letter-spacing:0.516px;">678,102K</span>
<div style="left:0px;top:153px;width:810px;height:17px;background:#505050;"></div>
<span class="t" style="left:24.00px;top:152.95px;font-size:13px;line-height:20px;color:#fff;letter-spacing:0.899px;">15:54:15 EST</span>
<span class="t" style="left:577.70px;top:152.95px;font-size:13px;line-height:20px;color:#ffff00;letter-spacing:0.688px;">1.210</span>
<span class="t" style="left:675.00px;top:152.95px;font-size:13px;line-height:20px;color:#00e000;letter-spacing:0.688px;">5,000</span>
<span class="t" style="left:747.40px;top:152.95px;font-size:13px;line-height:20px;color:#fff;letter-spacing:0.516px;">673,102K</span>
<div style="left:0px;top:170px;width:810px;height:17px;background:#000;"></div>
<span class="t" style="left:24.00px;top:169.95px;font-size:13px;line-height:20px;color:#fff;letter-spacing:0.899px;">15:53:34 EST</span>
<span class="t" style="left:577.70px;top:169.95px;font-size:13px;line-height:20px;color:#ffff00;letter-spacing:0.688px;">1.210</span>
<span class="t" style="left:675.00px;top:169.95px;font-size:13px;line-height:20px;color:#ff8c30;letter-spacing:0.688px;">1,000</span>
<span class="t" style="left:747.40px;top:169.95px;font-size:13px;line-height:20px;color:#fff;letter-spacing:0.516px;">675,002K</span>
<div style="left:0px;top:187px;width:810px;height:17px;background:#505050;"></div>
<span class="t" style="left:24.00px;top:186.95px;font-size:13px;line-height:20px;color:#fff;letter-spacing:0.899px;">15:53:33 EST</span>
<span class="t" style="left:185.10px;top:186.95px;font-size:13px;line-height:20px;color:#00e000;letter-spacing:0.624px;">10,000</span>
<span class="t" style="left:289.20px;top:186.95px;font-size:13px;line-height:20px;color:#00e000;letter-spacing:0.688px;">1.210</span>
<span class="t" style="left:385.70px;top:186.95px;font-size:13px;line-height:20px;color:#00e000;letter-spacing:0.688px;">1.240</span>
<span class="t" style="left:482.70px;top:186.95px;font-size:13px;line-height:20px;color:#00e000;letter-spacing:0.688px;">7,900</span>
<span class="t" style="left:747.40px;top:186.95px;font-size:13px;line-height:20px;color:#fff;letter-spacing:0.516px;">675,002K</span>
<div style="left:0px;top:204px;width:810px;height:17px;background:#000;"></div>
<span class="t" style="left:24.00px;top:203.95px;font-size:13px;line-height:20px;color:#fff;letter-spacing:0.899px;">15:53:33 EST</span>
<span class="t" style="left:577.70px;top:203.95px;font-size:13px;line-height:20px;color:#ffff00;letter-spacing:0.688px;">1.210</span>
<span class="t" style="left:675.00px;top:203.95px;font-size:13px;line-height:20px;color:#00e000;letter-spacing:0.688px;">4,000</span>
<span class="t" style="left:747.40px;top:203.95px;font-size:13px;line-height:20px;color:#fff;letter-spacing:0.516px;">671,002K</span>
</div>
<div style="left:1523px;top:707px;width:14px;height:214px;background:#ffffff;"></div>
<svg style="position:absolute;left:1523px;top:707px" width="14" height="214"><circle cx="7" cy="7" r="5.5" fill="#888"/><path d="M4 8.5 L10 8.5 L7 4.5 Z" fill="#fff"/><rect x="6" y="13" width="2" height="190" fill="#777"/><rect x="4" y="14" width="6" height="14" rx="3" fill="#888"/><circle cx="7" cy="206" r="5.5" fill="#888"/><path d="M4 204.5 L10 204.5 L7 208.5 Z" fill="#fff"/></svg>
<div style="left:708px;top:921px;width:829px;height:18px;background:#808185;"></div>
<span class="t" style="left:713.00px;top:920.14px;font-size:12px;line-height:20px;color:#f4f4f4;letter-spacing:0.185px;">Daten repräsentieren Spalten und nicht individuelle Trades Veränderungen</span>
<svg style="position:absolute;left:0;top:0" width="1537" height="939"><rect x="6" y="32" width="12" height="12" fill="#8a4638"/><path d="M8.5 34.5 L15.5 41.5 M15.5 34.5 L8.5 41.5" stroke="#f4f4f4" stroke-width="2.6"/><rect x="5" y="38" width="6" height="7" fill="#e0e0e0"/><path d="M107 31 L114.5 31 L118 34.5 L118 44.6 L107 44.6 Z" fill="#f2f2f2"/><path d="M114.5 31 L114.5 34.5 L118 34.5" fill="#c8c8c8"/><path d="M107 31.5 L118 44.5" stroke="#a03030" stroke-width="1"/><rect x="229" y="31" width="2.2" height="3" fill="#6ab060"/><path d="M226.8 34 L233.2 34 L230 37.5 Z" fill="#6ab060"/><path d="M226.8 41.5 L233.2 41.5 L230 38 Z" fill="#7aa0c8"/><rect x="229" y="41.5" width="2.2" height="3.2" fill="#7aa0c8"/><line x1="359.5" y1="35.0" x2="367.0" y2="42.5" stroke="#b8c0d0" stroke-width="2.6"/><circle cx="359.5" cy="35.0" r="3.3" fill="#b8c0d0"/><circle cx="367.0" cy="42.5" r="2.6" fill="#b8c0d0"/><line x1="357.0" y1="32.5" x2="359.5" y2="35.0" stroke="#231f20" stroke-width="2.0"/><line x1="367.0" y1="42.5" x2="369.0" y2="44.5" stroke="#231f20" stroke-width="1.6"/><rect x="431.5" y="31.2" width="13.5" height="13.5" rx="2" fill="#6c7c8a"/><rect x="432.5" y="32.2" width="11.5" height="11.5" rx="1.5" fill="#56646e"/><text x="434.8" y="42.2" font-size="9.5" font-weight="bold" fill="#111" font-family="Liberation Mono">H</text><path d="M670 80 L674 83.5 L672 83.5 Z" fill="#c8d0d8"/><circle cx="669" cy="78" r="4.8" fill="#6a7888" stroke="#3a4450" stroke-width="1"/><circle cx="668.2" cy="78.6" r="2.6" fill="#aeb8c4"/><circle cx="671.2" cy="75.4" r="2.3" fill="#808185"/><circle cx="685.5" cy="78.5" r="5.5" fill="#a8b8c8" stroke="#6a7a8c" stroke-width="1.2"/><circle cx="685.5" cy="78.5" r="3.5" fill="none" stroke="#d8e0e8" stroke-width="0.8"/><text x="682.9" y="81.7" font-size="8.5" font-weight="bold" fill="#fff" font-family="Liberation Sans">?</text><rect x="1226.5" y="7.5" width="13" height="13" fill="none" stroke="#777" stroke-width="1"/><path d="M1233 8.5 L1230.5 11 L1235.5 11 Z M1233 19.5 L1230.5 17 L1235.5 17 Z M1227.5 14 L1230 11.5 L1230 16.5 Z M1238.5 14 L1236 11.5 L1236 16.5 Z" fill="#e02020"/><rect x="1253" y="8" width="12" height="12" fill="#3cb0f0"/><rect x="1255.5" y="10" width="7" height="2" fill="#223"/><rect x="1258" y="10" width="2" height="8" fill="#223"/><path d="M1279 10 V21 M1282.5 7 V19 M1286 9 V20 M1289.5 11 V18" stroke="#c8c8c8" stroke-width="2"/><path d="M1304 20.5 H1313" stroke="#111" stroke-width="1"/><path d="M1304 20 L1306.5 15 L1309 13 L1311.5 15.5 L1312.5 20 Z" fill="#2a7ae0"/><circle cx="1331" cy="13.8" r="6" fill="#22b022"/><circle cx="1331" cy="13.8" r="4.6" fill="#30c030"/><text x="1327.6" y="17.6" font-size="10" font-weight="bold" fill="#fff" font-family="Liberation Sans">S</text><path d="M1350.5 7.5 L1363 20.5" stroke="#3a70b0" stroke-width="2"/><path d="M1361 8 V13 M1358.5 10.5 H1363.5" stroke="#5a8ac0" stroke-width="1"/><circle cx="1374.6" cy="13.8" r="5.6" fill="#c8c8c8"/><path d="M1371.5 12 L1377.7 12 L1374.6 15.5 Z" fill="#fff"/><circle cx="1395.5" cy="11.5" r="4.2" fill="#a8d098" stroke="#5a6a8a" stroke-width="1.3"/><path d="M1393.5 11.5 H1397.5 M1395.5 9.5 V13.5" stroke="#1a8a1a" stroke-width="1.3"/><path d="M1398.5 14.5 L1403 19" stroke="#e08a30" stroke-width="2.6"/><circle cx="1421.5" cy="11.5" r="4.2" fill="#d0b0a8" stroke="#5a6a8a" stroke-width="1.3"/><path d="M1419.5 11.5 H1423.5" stroke="#c02020" stroke-width="1.3"/><path d="M1424.5 14.5 L1429 19" stroke="#e08a30" stroke-width="2.6"/><path d="M1442 13.5 H1456 M1449 7 V20" stroke="#4a4a4a" stroke-width="1.6"/><rect x="1474" y="6" width="3" height="16" fill="#d8d8d8"/><path d="M1472.5 10.5 L1469 14 L1472.5 17.5 Z M1478.5 10.5 L1482 14 L1478.5 17.5 Z" fill="#d0d0d0"/><path d="M1497 11 H1507 L1502 13 Z" fill="#fff"/><path d="M1497.5 14 H1506.5 L1502 20 Z" fill="#fff"/><path d="M1510 59 L1513.5 62.5 L1511 62.5 Z" fill="#d0e0f0"/><circle cx="1509" cy="57.5" r="3.8" fill="#6a9ad0"/><circle cx="1508.5" cy="58" r="2" fill="#b0d0f0"/><circle cx="1511" cy="55.5" r="1.8" fill="#2a2a2a"/><circle cx="716" cy="546" r="5" fill="#dce8f4" stroke="#7a8ea8" stroke-width="1"/><path d="M713.5 543.5 L716 546 L718.8 544.2" fill="none" stroke="#222" stroke-width="1.2"/><circle cx="720.5" cy="551" r="3.2" fill="#22b040"/><path d="M719.5 549.5 L721.5 551 L719.5 552.5" stroke="#fff" stroke-width="0.8" fill="none"/><circle cx="723.7" cy="600.5" r="5" fill="#d4e6f6" stroke="#8ca0b8" stroke-width="1"/><path d="M721.2 598.0 L723.7 600.5 L726.5 598.7" fill="none" stroke="#222" stroke-width="1.2"/><path d="M714 604 L718.5 600.5 L718.5 602.7 L722 602.7 L722 605.3 L718.5 605.3 L718.5 607.5 Z" fill="#e02828"/><circle cx="842" cy="600.7" r="5.3" fill="#c8c8c8"/><path d="M845 598.5 H848 V596.5 L852 601 L848 605.5 V603.5 H845 Z" fill="#c8c8c8"/><circle cx="922.3" cy="600.5" r="5" fill="#d4e6f6" stroke="#8ca0b8" stroke-width="1"/><path d="M919.8 598.0 L922.3 600.5 L925.0999999999999 598.7" fill="none" stroke="#222" stroke-width="1.2"/><path d="M925 600.5 H928 V603.5 H930.5 L926.5 607.5 L922.5 603.5 H925 Z" fill="#3080e0"/><circle cx="976.5" cy="600.3" r="5.8" fill="#d4e6f6" stroke="#8ca0b8" stroke-width="1"/><path d="M974.0 597.8 L976.5 600.3 L979.3 598.5" fill="none" stroke="#222" stroke-width="1.2"/><path d="M971 607.5 L972 603 L975.5 602 L978.5 604.5 L976 607.5 Z" fill="#f04818"/><rect x="1128.7" y="593.7" width="14.8" height="14.5" fill="none" stroke="#20a0e8" stroke-width="1.4"/><text x="1131.3" y="605.8" font-size="12.5" font-weight="bold" fill="#20a8f0" font-family="Liberation Sans">R</text><circle cx="1222" cy="600.8" r="6" fill="#d4e6f6" stroke="#8ca0b8" stroke-width="1"/><path d="M1219.5 598.3 L1222 600.8 L1224.8 599.0" fill="none" stroke="#222" stroke-width="1.2"/><path d="M1216.5 603 Q1217 607.5 1220 608 L1218.5 605 Z" fill="#e8c040"/><line x1="1242.8" y1="597.9" x2="1250.3" y2="605.4" stroke="#b8c0d0" stroke-width="2.6"/><circle cx="1242.8" cy="597.9" r="3.3" fill="#b8c0d0"/><circle cx="1250.3" cy="605.4" r="2.6" fill="#b8c0d0"/><line x1="1240.3" y1="595.4" x2="1242.8" y2="597.9" stroke="#231f20" stroke-width="2.0"/><line x1="1250.3" y1="605.4" x2="1252.3" y2="607.4" stroke="#231f20" stroke-width="1.6"/><path d="M1518 624 L1522 627.5 L1520 627.5 Z" fill="#c8d0d8"/><circle cx="1517" cy="622" r="4.8" fill="#6a7888" stroke="#3a4450" stroke-width="1"/><circle cx="1516.2" cy="622.6" r="2.6" fill="#aeb8c4"/><circle cx="1519.2" cy="619.4" r="2.3" fill="#808185"/><circle cx="1532" cy="621.5" r="5.5" fill="#a8b8c8" stroke="#6a7a8c" stroke-width="1.2"/><circle cx="1532" cy="621.5" r="3.5" fill="none" stroke="#d8e0e8" stroke-width="0.8"/><text x="1529.4" y="624.7" font-size="8.5" font-weight="bold" fill="#fff" font-family="Liberation Sans">?</text><path d="M1534 682 L1538 685.5 L1536 685.5 Z" fill="#c8d0d8"/><circle cx="1533" cy="680" r="4.8" fill="#6a7888" stroke="#3a4450" stroke-width="1"/><circle cx="1532.2" cy="680.6" r="2.6" fill="#aeb8c4"/><circle cx="1535.2" cy="677.4" r="2.3" fill="#808185"/></svg>
</body></html>
